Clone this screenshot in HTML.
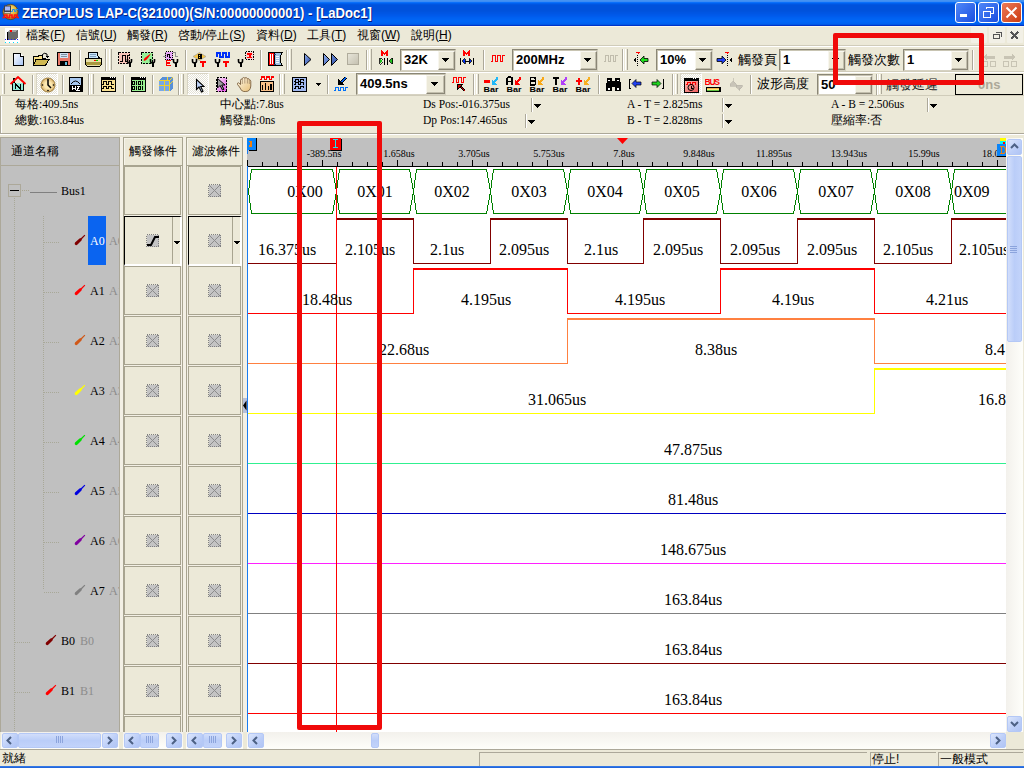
<!DOCTYPE html><html><head><meta charset="utf-8"><style>
html,body{margin:0;padding:0;}
body{width:1024px;height:768px;overflow:hidden;position:relative;background:#ECE9D8;font-family:"Liberation Sans",sans-serif;font-size:12px;color:#000;}
.cj{font-family:"Liberation Sans",sans-serif;}
</style></head><body>
<div style="position:absolute;left:0px;top:0px;width:1024px;height:26px;background:linear-gradient(to bottom,#4492F2 0px,#4492F2 1px,#3C8CF4 1px,#3C8CF4 2px,#0A70FA 2px,#0A70FA 3px,#0060EE 3px,#0060EE 4px,#0056E2 4px,#0056E2 5px,#0052DC 5px,#0052DC 6px,#0052DC 6px,#0052DC 7px,#0052DC 7px,#0052DC 8px,#0052DC 8px,#0052DC 9px,#0052DC 9px,#0052DC 10px,#0052DC 10px,#0052DC 11px,#0053DE 11px,#0053DE 12px,#0055E2 12px,#0055E2 13px,#0056E4 13px,#0056E4 14px,#0058E8 14px,#0058E8 15px,#005AEA 15px,#005AEA 16px,#005CEE 16px,#005CEE 17px,#0060F0 17px,#0060F0 18px,#0062F2 18px,#0062F2 19px,#0064F4 19px,#0064F4 20px,#0066F6 20px,#0066F6 21px,#0066F6 21px,#0066F6 22px,#0064F4 22px,#0064F4 23px,#0062F0 23px,#0062F0 24px,#0058E6 24px,#0058E6 25px,#0034C8 25px,#0034C8 26px)"></div>
<div style="position:absolute;left:0px;top:26px;width:1024px;height:1px;background:#FBF8EC"></div>
<svg style="position:absolute;left:2px;top:3px;shape-rendering:auto" width="18" height="18" viewBox="0 0 18 18" shape-rendering="crispEdges"><defs><radialGradient id="gap" cx="0.45" cy="0.35" r="0.7"><stop offset="0" stop-color="#FFF0A0"/><stop offset="0.6" stop-color="#E0B030"/><stop offset="1" stop-color="#8A6010"/></radialGradient></defs><circle cx="8.5" cy="9" r="7.6" fill="url(#gap)" stroke="#5A4010" stroke-width="0.8"/><rect x="2" y="2.5" width="7" height="8" fill="#404048"/><rect x="3" y="3.5" width="5" height="4" fill="#A8B8F8"/><rect x="2.5" y="9" width="6" height="1" fill="#D0D0D0"/><path d="M9 8.5 H10.5 V6.5 H12.5 V8.5 H14 V6.5 H16" stroke="#1890F0" fill="none"/><path d="M0.5 14.5 H2.5 V12 H5 V14.5 H7.5 V12 H10 V14.5 H12.5 V12 H15 V14.5 H17" stroke="#FF1010" stroke-width="1.6" fill="none"/></svg>
<div style="position:absolute;left:22px;top:3px;height:20px;line-height:20px;white-space:nowrap;font-family:'Liberation Sans', sans-serif;font-weight:bold;font-size:14px;color:#fff;text-shadow:1px 1px 0 #0A1E80;transform:scaleX(0.935);transform-origin:0 0">ZEROPLUS LAP-C(321000)(S/N:00000000001) - [LaDoc1]</div>
<div style="position:absolute;left:955px;top:2px;width:19px;height:19px;border:1px solid #fff;border-radius:3px;background:linear-gradient(135deg,#5088F8,#1A4EE0);"></div>
<svg style="position:absolute;left:955px;top:2px;" width="21" height="21" viewBox="0 0 21 21" shape-rendering="crispEdges"><rect x="5" y="12" width="7" height="3" fill="#fff"/></svg>
<div style="position:absolute;left:978px;top:2px;width:19px;height:19px;border:1px solid #fff;border-radius:3px;background:linear-gradient(135deg,#5088F8,#1A4EE0);"></div>
<svg style="position:absolute;left:978px;top:2px;" width="21" height="21" viewBox="0 0 21 21" shape-rendering="crispEdges"><rect x="5.5" y="9.5" width="7" height="6" fill="none" stroke="#fff" stroke-width="1.5"/><path d="M8.5 7 V5.5 H15.5 V11.5 H13" fill="none" stroke="#fff" stroke-width="1.5"/></svg>
<div style="position:absolute;left:1001px;top:2px;width:19px;height:19px;border:1px solid #fff;border-radius:3px;background:linear-gradient(135deg,#EC7A58,#CC3C12);"></div>
<svg style="position:absolute;left:1001px;top:2px;" width="21" height="21" viewBox="0 0 21 21" shape-rendering="crispEdges"><path d="M5.5 5.5 L15.5 15.5 M15.5 5.5 L5.5 15.5" stroke="#fff" stroke-width="2" shape-rendering="geometricPrecision"/></svg>
<svg style="position:absolute;left:4px;top:27px;" width="16" height="16" viewBox="0 0 16 16" shape-rendering="crispEdges"><rect x="1" y="1" width="15" height="15" fill="#fff"/><path d="M3 5 L6 3 H14 V11 L11 13 H3 Z" fill="#6A6A6A"/><path d="M6 3 H14 L11 5 H3 Z" fill="#A0A0A0"/><rect x="3" y="5" width="1" height="8" fill="#000"/><rect x="6" y="3" width="2" height="2" fill="#f00"/><path d="M1 12 H16" stroke="#2020ff" stroke-dasharray="1 2"/><path d="M1 15 H16" stroke="#00E0FF" stroke-dasharray="1 3"/></svg>
<div style="position:absolute;left:26px;top:27px;height:17px;line-height:17px;white-space:nowrap;font-size:12px;">檔案(<u>F</u>)</div>
<div style="position:absolute;left:76px;top:27px;height:17px;line-height:17px;white-space:nowrap;font-size:12px;">信號(<u>U</u>)</div>
<div style="position:absolute;left:127px;top:27px;height:17px;line-height:17px;white-space:nowrap;font-size:12px;">觸發(<u>R</u>)</div>
<div style="position:absolute;left:178px;top:27px;height:17px;line-height:17px;white-space:nowrap;font-size:12px;">啓動/停止(<u>S</u>)</div>
<div style="position:absolute;left:256px;top:27px;height:17px;line-height:17px;white-space:nowrap;font-size:12px;">資料(<u>D</u>)</div>
<div style="position:absolute;left:307px;top:27px;height:17px;line-height:17px;white-space:nowrap;font-size:12px;">工具(<u>T</u>)</div>
<div style="position:absolute;left:357px;top:27px;height:17px;line-height:17px;white-space:nowrap;font-size:12px;">視窗(<u>W</u>)</div>
<div style="position:absolute;left:411px;top:27px;height:17px;line-height:17px;white-space:nowrap;font-size:12px;">說明(<u>H</u>)</div>
<div style="position:absolute;left:971px;top:27px;width:16px;height:16px;background:#F2F0E6;border-radius:1px"></div>
<div style="position:absolute;left:989px;top:27px;width:16px;height:16px;background:#F2F0E6;border-radius:1px"></div>
<svg style="position:absolute;left:989px;top:27px;" width="16" height="16" viewBox="0 0 16 16" shape-rendering="crispEdges"><rect x="4.5" y="7.5" width="6" height="4" fill="none" stroke="#555" stroke-width="1.2"/><path d="M6.5 5.5 H12.5 V9.5" fill="none" stroke="#555" stroke-width="1.2"/></svg>
<div style="position:absolute;left:1007px;top:27px;width:16px;height:16px;background:#F2F0E6;border-radius:1px"></div>
<svg style="position:absolute;left:1007px;top:27px;" width="16" height="16" viewBox="0 0 16 16" shape-rendering="crispEdges"><path d="M4 5 L11 12 M11 5 L4 12" stroke="#555" stroke-width="2"/></svg>
<div style="position:absolute;left:0px;top:45px;width:1024px;height:1px;background:#D0CCBA"></div>
<div style="position:absolute;left:0px;top:46px;width:1024px;height:1px;background:#FFFFFF"></div>
<div style="position:absolute;left:0px;top:71px;width:1024px;height:1px;background:#D0CCBA"></div>
<div style="position:absolute;left:0px;top:72px;width:1024px;height:1px;background:#FFFFFF"></div>
<div style="position:absolute;left:0px;top:95px;width:1024px;height:1px;background:#D0CCBA"></div>
<div style="position:absolute;left:2px;top:49px;width:1px;height:21px;background:#FFFFFF"></div>
<div style="position:absolute;left:4px;top:49px;width:1px;height:21px;background:#ACA899"></div>
<svg style="position:absolute;left:12px;top:52px;" width="14" height="16" viewBox="0 0 14 16" shape-rendering="crispEdges"><defs><linearGradient id="gd" x1="0" y1="0" x2="1" y2="1"><stop offset="0" stop-color="#fff"/><stop offset="1" stop-color="#A8C4F4"/></linearGradient></defs><path d="M1.5 1.5 H8.5 L11.5 4.5 V13.5 H1.5 Z" fill="url(#gd)" stroke="#000"/><path d="M8.5 1.5 V4.5 H11.5" fill="#fff" stroke="#000"/></svg>
<svg style="position:absolute;left:33px;top:52px;" width="17" height="15" viewBox="0 0 17 15" shape-rendering="crispEdges"><path d="M0.5 4.5 H5 L6 3 H9 V6 H12 V13.5 H0.5 Z" fill="#F8E088" stroke="#000"/><path d="M3 7.5 H16 L12.5 13.5 H0.5 Z" fill="#D0B850" stroke="#000"/><path d="M9 3 Q11 0 14 2 V5" stroke="#000" fill="none" shape-rendering="auto"/><path d="M12 4 L14 6 L16 4" fill="#000"/></svg>
<svg style="position:absolute;left:57px;top:52px;" width="15" height="15" viewBox="0 0 15 15" shape-rendering="crispEdges"><rect x="0.5" y="0.5" width="13" height="13" fill="#E87868" stroke="#000"/><rect x="3" y="1" width="8" height="5" fill="#D0E4F4"/><path d="M4 2.5 H10 M4 4.5 H10" stroke="#8090A0"/><rect x="3" y="9" width="8" height="5" fill="#000"/><rect x="8" y="10" width="2" height="3" fill="#60C0E0"/></svg>
<div style="position:absolute;left:79px;top:50px;width:1px;height:20px;background:#ACA899"></div>
<div style="position:absolute;left:80px;top:50px;width:1px;height:20px;background:#FFFFFF"></div>
<svg style="position:absolute;left:85px;top:52px;" width="17" height="15" viewBox="0 0 17 15" shape-rendering="crispEdges"><path d="M3.5 0.5 H12.5 L13.5 6.5 H3.5 Z" fill="#C8E4F8" stroke="#000"/><path d="M5 2.5 H11 M5 4.5 H11" stroke="#80A0C0"/><path d="M0.5 6.5 H16.5 V12.5 L15 14 H2 L0.5 12.5 Z" fill="#E8E0A8" stroke="#000"/><rect x="1" y="10" width="15" height="3" fill="#A89840"/><rect x="9" y="8" width="2" height="1" fill="#f00"/><rect x="11" y="8" width="2" height="1" fill="#0c0"/><path d="M14 5 L16 7" stroke="#000"/></svg>
<div style="position:absolute;left:105px;top:49px;width:1px;height:22px;background:#ACA899"></div>
<div style="position:absolute;left:106px;top:49px;width:1px;height:22px;background:#FFFFFF"></div>
<div style="position:absolute;left:109px;top:49px;width:1px;height:21px;background:#FFFFFF"></div>
<div style="position:absolute;left:111px;top:49px;width:1px;height:21px;background:#ACA899"></div>
<svg style="position:absolute;left:117px;top:51px;" width="17" height="17" viewBox="0 0 17 17" shape-rendering="crispEdges"><rect x="1.5" y="1.5" width="11" height="11" fill="#F8C4B8" stroke="#000" stroke-dasharray="2 1"/><path d="M3 10 H5 V4 H8 V10 H10 V4 H12" stroke="#000" fill="none"/><path d="M10.5 8 V10 Q10.5 12 12.5 12 Q14.5 12 14.5 10 V8" stroke="#000" stroke-width="1.6" fill="none" shape-rendering="auto"/><rect x="11.5" y="11" width="2" height="5" fill="#000"/></svg>
<svg style="position:absolute;left:140px;top:51px;" width="17" height="17" viewBox="0 0 17 17" shape-rendering="crispEdges"><rect x="1.5" y="1.5" width="11" height="11" fill="#98F098" stroke="#000" stroke-dasharray="2 1"/><path d="M4 10 Q3 8 6 6 L10 3 L10.5 3.5 L8 7 Q6 10 4 10 Z" fill="#f00" shape-rendering="auto"/><path d="M10.5 8 V10 Q10.5 12 12.5 12 Q14.5 12 14.5 10 V8" stroke="#000" stroke-width="1.6" fill="none" shape-rendering="auto"/><rect x="11.5" y="11" width="2" height="5" fill="#000"/></svg>
<svg style="position:absolute;left:162px;top:50px;" width="18" height="18" viewBox="0 0 18 18" shape-rendering="crispEdges"><path d="M1 6 H3 V2 H7 V6 H9 V2 H13 V6 H16" stroke="#909090" fill="none"/><rect x="3.5" y="1.5" width="7" height="8" fill="#E8A8F8" stroke="#000" stroke-dasharray="1 1"/><path d="M5 7 V4 H7.5 V7 H9" stroke="#000" fill="none"/><path d="M4 10.5 H9 M4 13 H8 M4 15.5 H9 M4.5 10.5 V15.5" stroke="#f00" stroke-width="1.5"/><path d="M11.5 9 V11 Q11.5 13 13.5 13 Q15.5 13 15.5 11 V9" stroke="#000" stroke-width="1.6" fill="none" shape-rendering="auto"/><rect x="12.5" y="12" width="2" height="5" fill="#000"/></svg>
<div style="position:absolute;left:185px;top:50px;width:1px;height:20px;background:#ACA899"></div>
<div style="position:absolute;left:186px;top:50px;width:1px;height:20px;background:#FFFFFF"></div>
<svg style="position:absolute;left:191px;top:51px;" width="18" height="17" viewBox="0 0 18 17" shape-rendering="crispEdges"><path d="M2 5.5 L8.5 1.5 L15 5.5 L8.5 9.5 Z" fill="#F8C848" stroke="#A0A0A0" stroke-width="0.7" shape-rendering="auto"/><rect x="7" y="3" width="4" height="5" fill="#000"/><rect x="8" y="4" width="1" height="1" fill="#F8C848"/><rect x="8" y="6" width="1" height="1" fill="#F8C848"/><path d="M1.5 8 V10 Q1.5 12 3.5 12 Q5.5 12 5.5 10 V8" stroke="#000" stroke-width="1.6" fill="none" shape-rendering="auto"/><rect x="2.5" y="11" width="2" height="5" fill="#000"/><rect x="9" y="10" width="6" height="1.5" fill="#f00"/><rect x="11" y="10" width="2" height="6" fill="#f00"/></svg>
<svg style="position:absolute;left:214px;top:51px;" width="17" height="17" viewBox="0 0 17 17" shape-rendering="crispEdges"><path d="M3 6 V2 H6 V6 H9 V2 H12 V6 H15 V2 H16" stroke="#0030F8" stroke-width="1.8" fill="none"/><path d="M1.5 8 V10 Q1.5 12 3.5 12 Q5.5 12 5.5 10 V8" stroke="#000" stroke-width="1.6" fill="none" shape-rendering="auto"/><rect x="2.5" y="11" width="2" height="5" fill="#000"/><rect x="9" y="10" width="6" height="1.5" fill="#f00"/><rect x="11" y="10" width="2" height="6" fill="#f00"/></svg>
<svg style="position:absolute;left:237px;top:50px;" width="18" height="18" viewBox="0 0 18 18" shape-rendering="crispEdges"><rect x="8.5" y="1.5" width="8" height="8" fill="#F8D0D0" stroke="#000" stroke-dasharray="1.5 1"/><rect x="10" y="3" width="5" height="1.5" fill="#f00"/><rect x="11.5" y="3" width="2" height="5" fill="#f00"/><rect x="10" y="7" width="5" height="1" fill="#f00"/><path d="M1.5 9 V11 Q1.5 13 3.5 13 Q5.5 13 5.5 11 V9" stroke="#000" stroke-width="1.6" fill="none" shape-rendering="auto"/><rect x="2.5" y="12" width="2" height="5" fill="#000"/></svg>
<div style="position:absolute;left:260px;top:50px;width:1px;height:20px;background:#ACA899"></div>
<div style="position:absolute;left:261px;top:50px;width:1px;height:20px;background:#FFFFFF"></div>
<svg style="position:absolute;left:267px;top:51px;" width="17" height="16" viewBox="0 0 17 16" shape-rendering="crispEdges"><path d="M1.5 1.5 H7 V14.5 H1.5 Z" fill="#f00" stroke="#000"/><path d="M3.5 3 V13 M5.5 3 V13" stroke="#fff"/><path d="M7 1.5 H15.5 L13.5 5 V11 L15.5 14.5 H7 Z" fill="#A0C0E0" stroke="#000"/><path d="M9 5 H12 M9 7 H12 M9 9 H12 M9 11 H12" stroke="#F0F8FF"/><path d="M7 3 H9 M7 13 H9" stroke="#204080"/></svg>
<div style="position:absolute;left:286px;top:50px;width:1px;height:20px;background:#ACA899"></div>
<div style="position:absolute;left:287px;top:50px;width:1px;height:20px;background:#FFFFFF"></div>
<div style="position:absolute;left:289px;top:49px;width:1px;height:21px;background:#FFFFFF"></div>
<div style="position:absolute;left:291px;top:49px;width:1px;height:21px;background:#ACA899"></div>
<svg style="position:absolute;left:303px;top:52px;" width="10" height="16" viewBox="0 0 10 16" shape-rendering="crispEdges"><defs><linearGradient id="gp" x1="0" y1="0" x2="1" y2="1"><stop offset="0" stop-color="#90B0F0"/><stop offset="1" stop-color="#2848A0"/></linearGradient></defs><path d="M1.5 1.5 L8 7.5 L1.5 13.5 Z" fill="url(#gp)" stroke="#000" shape-rendering="auto"/></svg>
<svg style="position:absolute;left:322px;top:52px;" width="17" height="16" viewBox="0 0 17 16" shape-rendering="crispEdges"><path d="M1.5 1.5 L7.5 7.5 L1.5 13.5 Z M9.5 1.5 L15.5 7.5 L9.5 13.5 Z" fill="url(#gp)" stroke="#000" shape-rendering="auto"/></svg>
<svg style="position:absolute;left:347px;top:53px;" width="13" height="13" viewBox="0 0 13 13" shape-rendering="crispEdges"><defs><linearGradient id="gs" x1="0" y1="0" x2="1" y2="1"><stop offset="0" stop-color="#E8E6DA"/><stop offset="1" stop-color="#C4C0B0"/></linearGradient></defs><rect x="0.5" y="0.5" width="11" height="11" fill="url(#gs)" stroke="#B0AC9C"/></svg>
<div style="position:absolute;left:366px;top:50px;width:1px;height:20px;background:#ACA899"></div>
<div style="position:absolute;left:367px;top:50px;width:1px;height:20px;background:#FFFFFF"></div>
<div style="position:absolute;left:369px;top:49px;width:1px;height:21px;background:#FFFFFF"></div>
<div style="position:absolute;left:371px;top:49px;width:1px;height:21px;background:#ACA899"></div>
<svg style="position:absolute;left:378px;top:50px;" width="17" height="18" viewBox="0 0 17 18" shape-rendering="crispEdges"><path d="M4 6 V1.5 L6.5 4 L9 1.5 V6" stroke="#f00" stroke-width="1.5" fill="none"/><path d="M5 11 L1.5 8 V14 Z" fill="#20C020" stroke="#000" stroke-width="0.8"/><path d="M11 11 L14.5 8 V14 Z" fill="#20C020" stroke="#000" stroke-width="0.8"/><path d="M6.5 8 V15 M9.5 8 V15" stroke="#000"/></svg>
<div style="position:absolute;left:400px;top:49px;width:54px;height:20px;background:#fff;border-top:1px solid #8A8676;border-left:1px solid #8A8676;border-right:1px solid #D6D2C2;border-bottom:1px solid #D6D2C2;box-shadow:inset 1px 1px 0 #C8C4B2"></div>
<div style="position:absolute;left:404px;top:50px;height:20px;line-height:20px;white-space:nowrap;font-family:'Liberation Sans', sans-serif;font-weight:bold;font-size:13px;">32K</div>
<div style="position:absolute;left:438px;top:51px;width:15px;height:17px;background:#ECE9D8;border-right:1px solid #8A8676;border-bottom:1px solid #8A8676;border-left:1px solid #F8F6EE;border-top:1px solid #F8F6EE;box-shadow:inset -1px -1px 0 #C2BEAD"></div>
<svg style="position:absolute;left:442px;top:58px;" width="8" height="4" viewBox="0 0 8 4" shape-rendering="crispEdges"><path d="M0 0 H7 L3.5 4 Z" fill="#000"/></svg>
<svg style="position:absolute;left:459px;top:50px;" width="17" height="18" viewBox="0 0 17 18" shape-rendering="crispEdges"><path d="M5 6 V1.5 L7.5 4 L10 1.5 V6" stroke="#f00" stroke-width="1.5" fill="none"/><path d="M1.5 8 V15 M14.5 8 V15" stroke="#000"/><path d="M3 11 L6 8.5 V13.5 Z M13 11 L10 8.5 V13.5 Z" fill="#0030F0" stroke="#000" stroke-width="0.8"/><path d="M6 11 H10" stroke="#000"/></svg>
<div style="position:absolute;left:483px;top:50px;width:1px;height:20px;background:#ACA899"></div>
<div style="position:absolute;left:484px;top:50px;width:1px;height:20px;background:#FFFFFF"></div>
<svg style="position:absolute;left:490px;top:54px;" width="16" height="10" viewBox="0 0 16 10" shape-rendering="crispEdges"><path d="M0.5 7.5 H2.5 V1.5 H5.5 V7.5 H7.5 V1.5 H10.5 V7.5 H12.5 V1.5 H15" stroke="#f00" stroke-width="1.2" fill="none"/></svg>
<div style="position:absolute;left:512px;top:49px;width:84px;height:20px;background:#fff;border-top:1px solid #8A8676;border-left:1px solid #8A8676;border-right:1px solid #D6D2C2;border-bottom:1px solid #D6D2C2;box-shadow:inset 1px 1px 0 #C8C4B2"></div>
<div style="position:absolute;left:516px;top:50px;height:20px;line-height:20px;white-space:nowrap;font-family:'Liberation Sans', sans-serif;font-weight:bold;font-size:13px;">200MHz</div>
<div style="position:absolute;left:580px;top:51px;width:15px;height:17px;background:#ECE9D8;border-right:1px solid #8A8676;border-bottom:1px solid #8A8676;border-left:1px solid #F8F6EE;border-top:1px solid #F8F6EE;box-shadow:inset -1px -1px 0 #C2BEAD"></div>
<svg style="position:absolute;left:584px;top:58px;" width="8" height="4" viewBox="0 0 8 4" shape-rendering="crispEdges"><path d="M0 0 H7 L3.5 4 Z" fill="#000"/></svg>
<svg style="position:absolute;left:603px;top:54px;" width="16" height="10" viewBox="0 0 16 10" shape-rendering="crispEdges"><path d="M0.5 7.5 H2.5 V1.5 H5.5 V7.5 H7.5 V1.5 H10.5 V7.5 H12.5 V1.5 H15" stroke="#C0BCAC" fill="none"/></svg>
<div style="position:absolute;left:622px;top:49px;width:1px;height:22px;background:#ACA899"></div>
<div style="position:absolute;left:623px;top:49px;width:1px;height:22px;background:#FFFFFF"></div>
<div style="position:absolute;left:625px;top:49px;width:1px;height:21px;background:#FFFFFF"></div>
<div style="position:absolute;left:627px;top:49px;width:1px;height:21px;background:#ACA899"></div>
<svg style="position:absolute;left:632px;top:51px;" width="17" height="17" viewBox="0 0 17 17" shape-rendering="crispEdges"><path d="M5.5 4 V16" stroke="#000" stroke-dasharray="1 1"/><path d="M4 1.5 H8 M6 1.5 V3" stroke="#f00"/><path d="M1 9 L4 6.5 V11.5 Z" fill="#000"/><path d="M8 9 L12 5 V7.5 H16 V10.5 H12 V13 Z" fill="#20E020" stroke="#000" stroke-width="0.8" shape-rendering="auto"/></svg>
<div style="position:absolute;left:656px;top:49px;width:55px;height:20px;background:#fff;border-top:1px solid #8A8676;border-left:1px solid #8A8676;border-right:1px solid #D6D2C2;border-bottom:1px solid #D6D2C2;box-shadow:inset 1px 1px 0 #C8C4B2"></div>
<div style="position:absolute;left:660px;top:50px;height:20px;line-height:20px;white-space:nowrap;font-family:'Liberation Sans', sans-serif;font-weight:bold;font-size:13px;">10%</div>
<div style="position:absolute;left:695px;top:51px;width:15px;height:17px;background:#ECE9D8;border-right:1px solid #8A8676;border-bottom:1px solid #8A8676;border-left:1px solid #F8F6EE;border-top:1px solid #F8F6EE;box-shadow:inset -1px -1px 0 #C2BEAD"></div>
<svg style="position:absolute;left:699px;top:58px;" width="8" height="4" viewBox="0 0 8 4" shape-rendering="crispEdges"><path d="M0 0 H7 L3.5 4 Z" fill="#000"/></svg>
<svg style="position:absolute;left:716px;top:51px;" width="17" height="17" viewBox="0 0 17 17" shape-rendering="crispEdges"><path d="M11.5 4 V16" stroke="#000" stroke-dasharray="1 1"/><path d="M9 1.5 H13 M11 1.5 V3" stroke="#f00"/><path d="M10 9 L6 5 V7.5 H1 V10.5 H6 V13 Z" fill="#2040F0" stroke="#000" stroke-width="0.8" shape-rendering="auto"/><path d="M13 9 L16 6.5 V11.5 Z" fill="#000"/></svg>
<div style="position:absolute;left:738px;top:50px;height:20px;line-height:20px;white-space:nowrap;font-size:12.5px;">觸發頁</div>
<div style="position:absolute;left:779px;top:49px;width:65px;height:20px;background:#fff;border-top:1px solid #8A8676;border-left:1px solid #8A8676;border-right:1px solid #D6D2C2;border-bottom:1px solid #D6D2C2;box-shadow:inset 1px 1px 0 #C8C4B2"></div>
<div style="position:absolute;left:783px;top:50px;height:20px;line-height:20px;white-space:nowrap;font-family:'Liberation Sans', sans-serif;font-weight:bold;font-size:13px;">1</div>
<div style="position:absolute;left:828px;top:51px;width:15px;height:17px;background:#ECE9D8;border-right:1px solid #8A8676;border-bottom:1px solid #8A8676;border-left:1px solid #F8F6EE;border-top:1px solid #F8F6EE;box-shadow:inset -1px -1px 0 #C2BEAD"></div>
<svg style="position:absolute;left:832px;top:58px;" width="8" height="4" viewBox="0 0 8 4" shape-rendering="crispEdges"><path d="M0 0 H7 L3.5 4 Z" fill="#000"/></svg>
<div style="position:absolute;left:848px;top:50px;height:20px;line-height:20px;white-space:nowrap;font-size:12.5px;">觸發次數</div>
<div style="position:absolute;left:903px;top:49px;width:64px;height:20px;background:#fff;border-top:1px solid #8A8676;border-left:1px solid #8A8676;border-right:1px solid #D6D2C2;border-bottom:1px solid #D6D2C2;box-shadow:inset 1px 1px 0 #C8C4B2"></div>
<div style="position:absolute;left:907px;top:50px;height:20px;line-height:20px;white-space:nowrap;font-family:'Liberation Sans', sans-serif;font-weight:bold;font-size:13px;">1</div>
<div style="position:absolute;left:951px;top:51px;width:15px;height:17px;background:#ECE9D8;border-right:1px solid #8A8676;border-bottom:1px solid #8A8676;border-left:1px solid #F8F6EE;border-top:1px solid #F8F6EE;box-shadow:inset -1px -1px 0 #C2BEAD"></div>
<svg style="position:absolute;left:955px;top:58px;" width="8" height="4" viewBox="0 0 8 4" shape-rendering="crispEdges"><path d="M0 0 H7 L3.5 4 Z" fill="#000"/></svg>
<div style="position:absolute;left:972px;top:50px;width:1px;height:20px;background:#ACA899"></div>
<div style="position:absolute;left:973px;top:50px;width:1px;height:20px;background:#FFFFFF"></div>
<svg style="position:absolute;left:981px;top:52px;" width="17" height="16" viewBox="0 0 17 16" shape-rendering="crispEdges"><path d="M2 5 L6 1.5 V3.5 H14 V6.5 H6 V8.5 Z" fill="#C8C4B4"/><rect x="1.5" y="9.5" width="5" height="5" fill="none" stroke="#C8C4B4"/><rect x="9.5" y="9.5" width="5" height="5" fill="none" stroke="#C8C4B4"/></svg>
<svg style="position:absolute;left:1002px;top:52px;" width="17" height="16" viewBox="0 0 17 16" shape-rendering="crispEdges"><path d="M14 5 L10 1.5 V3.5 H2 V6.5 H10 V8.5 Z" fill="#C8C4B4"/><rect x="1.5" y="9.5" width="5" height="5" fill="none" stroke="#C8C4B4"/><rect x="9.5" y="9.5" width="5" height="5" fill="none" stroke="#C8C4B4"/></svg>
<div style="position:absolute;left:2px;top:74px;width:1px;height:20px;background:#FFFFFF"></div>
<div style="position:absolute;left:4px;top:74px;width:1px;height:20px;background:#ACA899"></div>
<svg style="position:absolute;left:10px;top:76px;" width="17" height="16" viewBox="0 0 17 16" shape-rendering="crispEdges"><path d="M2.5 6.5 V14.5 H13.5 V6.5" fill="#90E8D8" stroke="#000"/><rect x="3" y="2" width="2" height="5" fill="#000"/><path d="M0.5 8 L8 1 L15.5 8" stroke="#f00" stroke-width="1.8" fill="none" shape-rendering="auto"/><path d="M5.5 13 V8 L10.5 13 V8" stroke="#000" stroke-width="1.4" fill="none"/></svg>
<div style="position:absolute;left:32px;top:75px;width:1px;height:19px;background:#ACA899"></div>
<div style="position:absolute;left:33px;top:75px;width:1px;height:19px;background:#FFFFFF"></div>
<div style="position:absolute;left:36px;top:73px;width:22px;height:22px;background:conic-gradient(#FFFFFF 25%,#E4E2D6 0 50%,#FFFFFF 0 75%,#E4E2D6 0) 0 0/2px 2px;border-top:1px solid #D8D4C4;border-left:1px solid #D8D4C4;border-right:1px solid #fff;border-bottom:1px solid #fff;box-sizing:border-box"></div>
<svg style="position:absolute;left:40px;top:77px;shape-rendering:auto" width="16" height="16" viewBox="0 0 16 16" shape-rendering="crispEdges"><defs><radialGradient id="gc"><stop offset="0.5" stop-color="#FCE8B0"/><stop offset="1" stop-color="#D8B068"/></radialGradient></defs><circle cx="8" cy="8" r="7" fill="url(#gc)" stroke="#A08040"/><path d="M8 3 V8 L11 11" stroke="#000" stroke-width="1.5" fill="none"/><circle cx="8" cy="2.5" r="0.8"/><circle cx="8" cy="13.5" r="0.8"/><circle cx="2.5" cy="8" r="0.8"/><circle cx="13.5" cy="8" r="0.8"/></svg>
<div style="position:absolute;left:62px;top:75px;width:1px;height:19px;background:#ACA899"></div>
<div style="position:absolute;left:63px;top:75px;width:1px;height:19px;background:#FFFFFF"></div>
<svg style="position:absolute;left:68px;top:76px;" width="15" height="16" viewBox="0 0 15 16" shape-rendering="crispEdges"><rect x="0.5" y="0.5" width="14" height="15" fill="#000"/><rect x="2" y="2" width="11" height="7" fill="#A8C8F0"/><path d="M3 8 Q7.5 2 12 8" stroke="#000" fill="none" shape-rendering="auto"/><path d="M4 10 V14 M4 12 H7 M7 10 V14 M9 10 H12 L9 14 H12" stroke="#fff"/></svg>
<div style="position:absolute;left:88px;top:74px;width:1px;height:21px;background:#ACA899"></div>
<div style="position:absolute;left:89px;top:74px;width:1px;height:21px;background:#FFFFFF"></div>
<div style="position:absolute;left:91px;top:74px;width:1px;height:20px;background:#FFFFFF"></div>
<div style="position:absolute;left:93px;top:74px;width:1px;height:20px;background:#ACA899"></div>
<svg style="position:absolute;left:100px;top:76px;" width="16" height="16" viewBox="0 0 16 16" shape-rendering="crispEdges"><rect x="0.5" y="0.5" width="15" height="15" fill="#000"/><rect x="1.5" y="3.5" width="13" height="11" fill="#F8E090"/><rect x="10" y="1" width="1" height="1" fill="#fff"/><rect x="12" y="1" width="1" height="1" fill="#fff"/><path d="M2 8.5 H3.5 V5.5 H6.5 V8.5 H8.5 V5.5 H11.5 V8.5 H14 M2 12.5 H3.5 V10 H6.5 V12.5 H8.5 V10 H11.5 V12.5 H14" stroke="#000" fill="none"/><rect x="14" y="1" width="1" height="1" fill="#fff"/></svg>
<div style="position:absolute;left:123px;top:75px;width:1px;height:19px;background:#ACA899"></div>
<div style="position:absolute;left:124px;top:75px;width:1px;height:19px;background:#FFFFFF"></div>
<svg style="position:absolute;left:130px;top:76px;" width="16" height="16" viewBox="0 0 16 16" shape-rendering="crispEdges"><rect x="0.5" y="0.5" width="15" height="15" fill="#000"/><rect x="1.5" y="3.5" width="13" height="11" fill="#98F090"/><rect x="10" y="1" width="1" height="1" fill="#fff"/><rect x="12" y="1" width="1" height="1" fill="#fff"/><rect x="2.5" y="5.5" width="2" height="3" fill="none" stroke="#000"/><rect x="8.5" y="5.5" width="2" height="3" fill="none" stroke="#000"/><rect x="2.5" y="10.5" width="2" height="3" fill="none" stroke="#000"/><rect x="8.5" y="10.5" width="2" height="3" fill="none" stroke="#000"/><path d="M6.5 5 V9 M12.5 5 V9 M6.5 10 V14 M12.5 10 V14" stroke="#000"/><rect x="14" y="1" width="1" height="1" fill="#fff"/></svg>
<div style="position:absolute;left:152px;top:75px;width:1px;height:19px;background:#ACA899"></div>
<div style="position:absolute;left:153px;top:75px;width:1px;height:19px;background:#FFFFFF"></div>
<svg style="position:absolute;left:158px;top:76px;" width="16" height="16" viewBox="0 0 16 16" shape-rendering="crispEdges"><path d="M1 4 L4 1 H15 V12 L12 15 H1 Z" fill="#5890D8"/><rect x="1" y="4" width="11" height="11" fill="#78A8E8"/><path d="M1 4.5 H11.5 V15 M11.5 4.5 L15 1" stroke="#F0D030" fill="none"/><path d="M6.5 4 V15 M1 9.5 H12 M9 1 V4 M12 8 L15 5" stroke="#F0D030"/></svg>
<div style="position:absolute;left:178px;top:74px;width:1px;height:21px;background:#ACA899"></div>
<div style="position:absolute;left:179px;top:74px;width:1px;height:21px;background:#FFFFFF"></div>
<div style="position:absolute;left:181px;top:74px;width:1px;height:20px;background:#FFFFFF"></div>
<div style="position:absolute;left:183px;top:74px;width:1px;height:20px;background:#ACA899"></div>
<div style="position:absolute;left:187px;top:73px;width:22px;height:22px;background:conic-gradient(#FFFFFF 25%,#E4E2D6 0 50%,#FFFFFF 0 75%,#E4E2D6 0) 0 0/2px 2px;border-top:1px solid #D8D4C4;border-left:1px solid #D8D4C4;border-right:1px solid #fff;border-bottom:1px solid #fff;box-sizing:border-box"></div>
<svg style="position:absolute;left:195px;top:78px;shape-rendering:auto" width="10" height="15" viewBox="0 0 10 15" shape-rendering="crispEdges"><path d="M1.5 1.5 L1.5 11.5 L4 9 L6.5 14 L8 13.2 L5.7 8.5 L9 8.5 Z" fill="#C0D4F8" stroke="#000" stroke-width="1.1" stroke-linejoin="miter"/></svg>
<svg style="position:absolute;left:215px;top:76px;" width="14" height="17" viewBox="0 0 14 17" shape-rendering="crispEdges"><defs><linearGradient id="gpk" x1="0" y1="0" x2="1" y2="1"><stop offset="0" stop-color="#F8F0F8"/><stop offset="1" stop-color="#E850E8"/></linearGradient></defs><rect x="1.5" y="1.5" width="10" height="14" fill="url(#gpk)" stroke="#000" stroke-dasharray="2 1"/><path d="M2.5 2.5 L2.5 12 L5 9.5 L7.5 14 L9 13.2 L6.7 9 L10 9 Z" fill="#A0A0A0" stroke="#000" shape-rendering="auto"/></svg>
<svg style="position:absolute;left:236px;top:76px;shape-rendering:auto" width="17" height="17" viewBox="0 0 17 17" shape-rendering="crispEdges"><defs><linearGradient id="gh" x1="0" y1="0" x2="1" y2="1"><stop offset="0" stop-color="#FFF8E8"/><stop offset="1" stop-color="#E8C078"/></linearGradient></defs><path d="M3.5 11 L1.5 8.5 Q1 6.8 2.6 6.8 L4.5 8.5 V4.2 Q4.8 2.6 6.3 3.2 V2.4 Q7.3 0.8 8.8 2 Q10.2 0.9 11.4 2.5 Q13 2.2 13.3 3.8 Q14.8 3.9 14.8 5.3 V10 Q14.3 15.5 9.8 15.5 H7.8 Q5.3 15.5 3.5 11 Z" fill="url(#gh)" stroke="#7A6040" stroke-width="0.9"/><path d="M6.3 3.2 V8 M8.8 2 V7.5 M11.4 2.5 V7.5 M13.3 3.8 V8" stroke="#9A8060" stroke-width="0.7"/></svg>
<svg style="position:absolute;left:259px;top:76px;" width="16" height="16" viewBox="0 0 16 16" shape-rendering="crispEdges"><path d="M0.5 3.5 H2.5 V1 H5.5 V3.5 H7.5 V1 H10.5 V3.5 H12.5 V1 H15" stroke="#f00" fill="none" stroke-width="1.2"/><rect x="0.5" y="4.5" width="14" height="11" fill="#000"/><rect x="1.5" y="5.5" width="12" height="9" fill="#F8C088"/><path d="M3.5 14 V9 M6.5 14 V7 M9.5 14 V10 M12 14 V8" stroke="#000" stroke-width="1.5"/></svg>
<div style="position:absolute;left:279px;top:74px;width:1px;height:21px;background:#ACA899"></div>
<div style="position:absolute;left:280px;top:74px;width:1px;height:21px;background:#FFFFFF"></div>
<div style="position:absolute;left:282px;top:74px;width:1px;height:20px;background:#FFFFFF"></div>
<div style="position:absolute;left:284px;top:74px;width:1px;height:20px;background:#ACA899"></div>
<svg style="position:absolute;left:291px;top:76px;" width="16" height="16" viewBox="0 0 16 16" shape-rendering="crispEdges"><rect x="0.5" y="0.5" width="15" height="15" fill="#000"/><rect x="1.5" y="1.5" width="13" height="13" fill="#A0B8F0"/><path d="M2.5 5 H4.5 V3 H7.5 V5 H9.5 V3 H12.5 V5 M2.5 8.5 H4.5 V6.5 H7.5 V8.5 H9.5 V6.5 H12.5 V8.5 M2.5 12 H4.5 V10 H7.5 V12 H9.5 V10 H12.5 V12" stroke="#000" fill="none"/></svg>
<svg style="position:absolute;left:315px;top:83px;" width="6" height="3" viewBox="0 0 6 3" shape-rendering="crispEdges"><path d="M0 0 H6 L3 3 Z" fill="#000"/></svg>
<div style="position:absolute;left:327px;top:75px;width:1px;height:19px;background:#ACA899"></div>
<div style="position:absolute;left:328px;top:75px;width:1px;height:19px;background:#FFFFFF"></div>
<svg style="position:absolute;left:333px;top:76px;" width="16" height="16" viewBox="0 0 16 16" shape-rendering="crispEdges"><path d="M0.5 14.5 H2.5 V11.5 H5.5 V14.5 H7.5 V11.5 H10.5 V14.5 H12.5 V11.5 H15" stroke="#0070F8" stroke-width="1.3" fill="none"/><path d="M13 1.5 L7 7.5" stroke="#000" stroke-width="3"/><path d="M13 1.5 L7 7.5" stroke="#0060F0" stroke-width="1.5"/><path d="M5 3 V9 H11 Z" fill="#000"/></svg>
<div style="position:absolute;left:356px;top:73px;width:88px;height:20px;background:#fff;border-top:1px solid #8A8676;border-left:1px solid #8A8676;border-right:1px solid #D6D2C2;border-bottom:1px solid #D6D2C2;box-shadow:inset 1px 1px 0 #C8C4B2"></div>
<div style="position:absolute;left:360px;top:74px;height:20px;line-height:20px;white-space:nowrap;font-family:'Liberation Sans', sans-serif;font-weight:bold;font-size:13px;">409.5ns</div>
<div style="position:absolute;left:426px;top:75px;width:17px;height:17px;background:#ECE9D8;border-right:1px solid #8A8676;border-bottom:1px solid #8A8676;border-left:1px solid #F8F6EE;border-top:1px solid #F8F6EE;box-shadow:inset -1px -1px 0 #C2BEAD"></div>
<svg style="position:absolute;left:431px;top:82px;" width="8" height="4" viewBox="0 0 8 4" shape-rendering="crispEdges"><path d="M0 0 H7 L3.5 4 Z" fill="#000"/></svg>
<svg style="position:absolute;left:451px;top:76px;" width="16" height="16" viewBox="0 0 16 16" shape-rendering="crispEdges"><path d="M0.5 6.5 H2.5 V1.5 H5.5 V6.5 H7.5 V1.5 H10.5 V6.5 H12.5 V1.5 H15" stroke="#f00" stroke-width="1.3" fill="none"/><path d="M14 15 L9 10" stroke="#000" stroke-width="2.6"/><path d="M14 15 L9 10" stroke="#D00000" stroke-width="1"/><path d="M6 8 H12 L6 14 Z" fill="#000"/><path d="M7 9 H10 L7 12 Z" fill="#D00000"/></svg>
<div style="position:absolute;left:473px;top:74px;width:1px;height:21px;background:#ACA899"></div>
<div style="position:absolute;left:474px;top:74px;width:1px;height:21px;background:#FFFFFF"></div>
<div style="position:absolute;left:476px;top:74px;width:1px;height:20px;background:#FFFFFF"></div>
<div style="position:absolute;left:478px;top:74px;width:1px;height:20px;background:#ACA899"></div>
<svg style="position:absolute;left:483px;top:76px;" width="17" height="17" viewBox="0 0 17 17" shape-rendering="crispEdges"><rect x="1" y="4" width="6" height="2.5" fill="#f00"/><path d="M14 1 V3 L10.5 6.5" stroke="#20B8F8" stroke-width="2.2" fill="none"/><path d="M8.5 3.5 V9 H14 Z" fill="#20B8F8"/><text x="0.5" y="16" font-size="7" font-weight="bold" fill="#000" font-family="Liberation Sans" textLength="15" lengthAdjust="spacingAndGlyphs">Bar</text></svg>
<svg style="position:absolute;left:506px;top:76px;" width="17" height="17" viewBox="0 0 17 17" shape-rendering="crispEdges"><path d="M1 9 V3 Q1 1 3.5 1 Q6 1 6 3 V9 M1 5.5 H6" stroke="#000" stroke-width="1.8" fill="none"/><path d="M14 1 V3 L10.5 6.5" stroke="#f00" stroke-width="2.2" fill="none"/><path d="M8.5 3.5 V9 H14 Z" fill="#f00"/><text x="0.5" y="16" font-size="7" font-weight="bold" fill="#000" font-family="Liberation Sans" textLength="15" lengthAdjust="spacingAndGlyphs">Bar</text></svg>
<svg style="position:absolute;left:529px;top:76px;" width="17" height="17" viewBox="0 0 17 17" shape-rendering="crispEdges"><path d="M1.5 9 V1.5 H4.5 Q6.5 1.5 6.5 3.2 Q6.5 5 4.5 5 Q6.5 5 6.5 7 Q6.5 9 4.5 9 Z M1.5 5 H4.5" stroke="#000" stroke-width="1.6" fill="none"/><path d="M14 1 V3 L10.5 6.5" stroke="#F8A818" stroke-width="2.2" fill="none"/><path d="M8.5 3.5 V9 H14 Z" fill="#F8A818"/><text x="0.5" y="16" font-size="7" font-weight="bold" fill="#000" font-family="Liberation Sans" textLength="15" lengthAdjust="spacingAndGlyphs">Bar</text></svg>
<svg style="position:absolute;left:552px;top:76px;" width="17" height="17" viewBox="0 0 17 17" shape-rendering="crispEdges"><path d="M0.5 1.8 H7 M3.75 1.8 V9" stroke="#000" stroke-width="1.8" fill="none"/><path d="M14 1 V3 L10.5 6.5" stroke="#B040F8" stroke-width="2.2" fill="none"/><path d="M8.5 3.5 V9 H14 Z" fill="#B040F8"/><text x="0.5" y="16" font-size="7" font-weight="bold" fill="#000" font-family="Liberation Sans" textLength="15" lengthAdjust="spacingAndGlyphs">Bar</text></svg>
<svg style="position:absolute;left:575px;top:76px;" width="17" height="17" viewBox="0 0 17 17" shape-rendering="crispEdges"><path d="M0.5 5 H7 M3.75 1.5 V8.5" stroke="#f00" stroke-width="2"/><path d="M14 1 V3 L10.5 6.5" stroke="#F8B020" stroke-width="2.2" fill="none"/><path d="M8.5 3.5 V9 H14 Z" fill="#F8B020"/><text x="0.5" y="16" font-size="7" font-weight="bold" fill="#000" font-family="Liberation Sans" textLength="15" lengthAdjust="spacingAndGlyphs">Bar</text></svg>
<div style="position:absolute;left:598px;top:75px;width:1px;height:19px;background:#ACA899"></div>
<div style="position:absolute;left:599px;top:75px;width:1px;height:19px;background:#FFFFFF"></div>
<svg style="position:absolute;left:605px;top:77px;" width="17" height="15" viewBox="0 0 17 15" shape-rendering="crispEdges"><path d="M2 1 H7 V4 H10 V1 H15 V5 L16 6 V14 H10 V10 H7 V14 H1 V6 L2 5 Z" fill="#000"/><rect x="3" y="11" width="2" height="2" fill="#fff"/><rect x="12" y="11" width="2" height="2" fill="#fff"/><rect x="3" y="3" width="2" height="1" fill="#fff"/><rect x="12" y="3" width="2" height="1" fill="#fff"/></svg>
<svg style="position:absolute;left:628px;top:78px;" width="14" height="12" viewBox="0 0 14 12" shape-rendering="crispEdges"><path d="M2.5 1 H1.5 V10.5 H3" stroke="#000" fill="none"/><path d="M4 5.5 L8 1.5 V4 H13 V7 H8 V9.5 Z" fill="#2040F0" stroke="#000" stroke-width="0.7" shape-rendering="auto"/></svg>
<svg style="position:absolute;left:651px;top:78px;" width="14" height="12" viewBox="0 0 14 12" shape-rendering="crispEdges"><path d="M11.5 1 H12.5 V10.5 H11" stroke="#000" fill="none"/><path d="M10 5.5 L6 1.5 V4 H1 V7 H6 V9.5 Z" fill="#20D020" stroke="#000" stroke-width="0.7" shape-rendering="auto"/></svg>
<div style="position:absolute;left:672px;top:74px;width:1px;height:21px;background:#ACA899"></div>
<div style="position:absolute;left:673px;top:74px;width:1px;height:21px;background:#FFFFFF"></div>
<div style="position:absolute;left:675px;top:74px;width:1px;height:20px;background:#FFFFFF"></div>
<div style="position:absolute;left:677px;top:74px;width:1px;height:20px;background:#ACA899"></div>
<div style="position:absolute;left:680px;top:73px;width:22px;height:22px;background:conic-gradient(#FFFFFF 25%,#E4E2D6 0 50%,#FFFFFF 0 75%,#E4E2D6 0) 0 0/2px 2px;border-top:1px solid #D8D4C4;border-left:1px solid #D8D4C4;border-right:1px solid #fff;border-bottom:1px solid #fff;box-sizing:border-box"></div>
<svg style="position:absolute;left:683px;top:77px;" width="16" height="16" viewBox="0 0 16 16" shape-rendering="crispEdges"><rect x="0.5" y="0.5" width="15" height="15" fill="#000"/><defs><linearGradient id="gr" x1="0" y1="0" x2="1" y2="1"><stop offset="0" stop-color="#FFC0B8"/><stop offset="1" stop-color="#F06060"/></linearGradient></defs><rect x="1.5" y="3.5" width="13" height="11" fill="url(#gr)"/><rect x="10" y="1" width="1" height="1" fill="#fff"/><rect x="12" y="1" width="1" height="1" fill="#fff"/><path d="M2.5 7.5 H4.5 V5 H7.5 V7.5 H9.5 V5 H12.5 V7.5" stroke="#f00" fill="none"/><circle cx="8" cy="10.5" r="3" fill="none" stroke="#000" shape-rendering="auto"/><path d="M8 8.5 V10.5 L9.5 12" stroke="#000" fill="none"/></svg>
<svg style="position:absolute;left:705px;top:77px;" width="16" height="16" viewBox="0 0 16 16" shape-rendering="crispEdges"><text x="-0.5" y="7.5" font-size="8.5" font-weight="bold" fill="#f00" font-family="Liberation Sans" textLength="15.5">BUS</text><rect x="0.5" y="9.5" width="15" height="5" fill="#000"/><rect x="2" y="10.5" width="12" height="1" fill="#F8B050"/><rect x="2" y="11.5" width="12" height="1" fill="#F8F080"/><rect x="2" y="12.5" width="12" height="1" fill="#60C040"/></svg>
<svg style="position:absolute;left:729px;top:77px;" width="14" height="15" viewBox="0 0 14 15" shape-rendering="crispEdges"><path d="M4 1 V4 M1 7 L4 4 L7 7 V9 H1 Z M7 9 V11 M10 11 V14 M7 8 H13 V10 L10 13 L7 10 Z" fill="#C8C4B8" stroke="#B8B4A8" stroke-width="0.6"/></svg>
<div style="position:absolute;left:750px;top:75px;width:1px;height:19px;background:#ACA899"></div>
<div style="position:absolute;left:751px;top:75px;width:1px;height:19px;background:#FFFFFF"></div>
<div style="position:absolute;left:757px;top:74px;height:20px;line-height:20px;white-space:nowrap;font-size:12.5px;">波形高度</div>
<div style="position:absolute;left:817px;top:74px;width:54px;height:19px;background:#fff;border-top:1px solid #8A8676;border-left:1px solid #8A8676;border-right:1px solid #D6D2C2;border-bottom:1px solid #D6D2C2;box-shadow:inset 1px 1px 0 #C8C4B2"></div>
<div style="position:absolute;left:821px;top:75px;height:19px;line-height:19px;white-space:nowrap;font-family:'Liberation Sans', sans-serif;font-weight:bold;font-size:13px;">50</div>
<div style="position:absolute;left:855px;top:76px;width:15px;height:16px;background:#ECE9D8;border-right:1px solid #8A8676;border-bottom:1px solid #8A8676;border-left:1px solid #F8F6EE;border-top:1px solid #F8F6EE;box-shadow:inset -1px -1px 0 #C2BEAD"></div>
<div style="position:absolute;left:876px;top:74px;width:1px;height:21px;background:#ACA899"></div>
<div style="position:absolute;left:877px;top:74px;width:1px;height:21px;background:#FFFFFF"></div>
<div style="position:absolute;left:879px;top:74px;width:1px;height:20px;background:#FFFFFF"></div>
<div style="position:absolute;left:881px;top:74px;width:1px;height:20px;background:#ACA899"></div>
<div style="position:absolute;left:886px;top:75px;height:20px;line-height:20px;white-space:nowrap;font-size:12.5px;color:#222">觸發延遲</div>
<div style="position:absolute;left:955px;top:74px;width:68px;height:21px;box-sizing:border-box;border:1px solid #000;background:#ECE9D8"></div>
<div style="position:absolute;left:978px;top:75px;height:19px;line-height:19px;white-space:nowrap;font-family:'Liberation Sans', sans-serif;font-weight:bold;font-size:13px;color:#ACA899">0ns</div>
<div style="position:absolute;left:0px;top:96px;width:1px;height:38px;background:#ACA899"></div>
<div style="position:absolute;left:1px;top:96px;width:1px;height:38px;background:#FFFFFF"></div>
<div style="position:absolute;left:0px;top:133px;width:1024px;height:1px;background:#ACA899"></div>
<div style="position:absolute;left:0px;top:134px;width:1024px;height:1px;background:#FFFFFF"></div>
<div style="position:absolute;left:15px;top:96px;height:16px;line-height:16px;white-space:nowrap;font-family:'Liberation Serif', serif;font-size:11.5px;">每格:409.5ns</div>
<div style="position:absolute;left:15px;top:112px;height:16px;line-height:16px;white-space:nowrap;font-family:'Liberation Serif', serif;font-size:11.5px;">總數:163.84us</div>
<div style="position:absolute;left:220px;top:96px;height:16px;line-height:16px;white-space:nowrap;font-family:'Liberation Serif', serif;font-size:11.5px;">中心點:7.8us</div>
<div style="position:absolute;left:220px;top:112px;height:16px;line-height:16px;white-space:nowrap;font-family:'Liberation Serif', serif;font-size:11.5px;">觸發點:0ns</div>
<div style="position:absolute;left:423px;top:96px;height:16px;line-height:16px;white-space:nowrap;font-family:'Liberation Serif', serif;font-size:11.5px;">Ds Pos:-016.375us</div>
<div style="position:absolute;left:423px;top:112px;height:16px;line-height:16px;white-space:nowrap;font-family:'Liberation Serif', serif;font-size:11.5px;">Dp Pos:147.465us</div>
<div style="position:absolute;left:627px;top:96px;height:16px;line-height:16px;white-space:nowrap;font-family:'Liberation Serif', serif;font-size:11.5px;">A - T = 2.825ms</div>
<div style="position:absolute;left:627px;top:112px;height:16px;line-height:16px;white-space:nowrap;font-family:'Liberation Serif', serif;font-size:11.5px;">B - T = 2.828ms</div>
<div style="position:absolute;left:831px;top:96px;height:16px;line-height:16px;white-space:nowrap;font-family:'Liberation Serif', serif;font-size:11.5px;">A - B = 2.506us</div>
<div style="position:absolute;left:831px;top:112px;height:16px;line-height:16px;white-space:nowrap;font-family:'Liberation Serif', serif;font-size:11.5px;">壓縮率:否</div>
<div style="position:absolute;left:531px;top:98px;width:1px;height:14px;background:#ACA899"></div>
<div style="position:absolute;left:532px;top:98px;width:1px;height:14px;background:#FFFFFF"></div>
<svg style="position:absolute;left:534px;top:104px;" width="8" height="4" viewBox="0 0 8 4" shape-rendering="crispEdges"><path d="M0 0 H7 L3.5 4 Z" fill="#000"/></svg>
<div style="position:absolute;left:525px;top:114px;width:1px;height:14px;background:#ACA899"></div>
<div style="position:absolute;left:526px;top:114px;width:1px;height:14px;background:#FFFFFF"></div>
<svg style="position:absolute;left:528px;top:120px;" width="8" height="4" viewBox="0 0 8 4" shape-rendering="crispEdges"><path d="M0 0 H7 L3.5 4 Z" fill="#000"/></svg>
<div style="position:absolute;left:722px;top:98px;width:1px;height:14px;background:#ACA899"></div>
<div style="position:absolute;left:723px;top:98px;width:1px;height:14px;background:#FFFFFF"></div>
<svg style="position:absolute;left:725px;top:104px;" width="8" height="4" viewBox="0 0 8 4" shape-rendering="crispEdges"><path d="M0 0 H7 L3.5 4 Z" fill="#000"/></svg>
<div style="position:absolute;left:722px;top:114px;width:1px;height:14px;background:#ACA899"></div>
<div style="position:absolute;left:723px;top:114px;width:1px;height:14px;background:#FFFFFF"></div>
<svg style="position:absolute;left:725px;top:120px;" width="8" height="4" viewBox="0 0 8 4" shape-rendering="crispEdges"><path d="M0 0 H7 L3.5 4 Z" fill="#000"/></svg>
<div style="position:absolute;left:927px;top:98px;width:1px;height:14px;background:#ACA899"></div>
<div style="position:absolute;left:928px;top:98px;width:1px;height:14px;background:#FFFFFF"></div>
<svg style="position:absolute;left:930px;top:104px;" width="8" height="4" viewBox="0 0 8 4" shape-rendering="crispEdges"><path d="M0 0 H7 L3.5 4 Z" fill="#000"/></svg>
<div style="position:absolute;left:0px;top:137px;width:120px;height:595px;background:#C0C0C0"></div>
<div style="position:absolute;left:0px;top:137px;width:1px;height:595px;background:#ACA899"></div>
<div style="position:absolute;left:119px;top:137px;width:1px;height:595px;background:#ACA899"></div>
<div style="position:absolute;left:0px;top:137px;width:120px;height:1px;background:#ACA899"></div>
<div style="position:absolute;left:1px;top:165px;width:118px;height:1px;background:#ACA899"></div>
<div style="position:absolute;left:11px;top:142px;height:18px;line-height:18px;white-space:nowrap;font-size:12px;">通道名稱</div>
<svg style="position:absolute;left:0px;top:166px;" width="120" height="566" viewBox="0 0 120 566" shape-rendering="crispEdges">
<rect x="8.5" y="18.5" width="12" height="12" fill="none" stroke="#ACA899"/>
<path d="M10 24.5 H19" stroke="#000"/>
<path d="M22 24.5 H29" stroke="#A8A490" stroke-dasharray="1 1"/>
<path d="M30 26.5 H57" stroke="#808080"/>
<path d="M14.5 32 V566" stroke="#A8A898" stroke-dasharray="1 1"/>
<path d="M43.5 50 V424" stroke="#A8A898" stroke-dasharray="1 1"/>
</svg>
<svg style="position:absolute;left:44px;top:242px;" width="16" height="1" viewBox="0 0 16 1" shape-rendering="crispEdges"><path d="M0 0.5 H15" stroke="#A8A898" stroke-dasharray="1 1"/></svg>
<svg style="position:absolute;left:74px;top:234px;shape-rendering:auto" width="12" height="12" viewBox="0 0 12 12" shape-rendering="crispEdges"><path d="M1.5 11 Q0 10 1 8.5 L5.5 4.5 L7 4 L10.5 0.8 L11.3 1.6 L8 5 L7.5 6.5 L3.5 10.5 Q2.5 11.5 1.5 11 Z" fill="#800000"/></svg>
<div style="position:absolute;left:88px;top:216px;width:18px;height:49px;background:#0A64F0"></div>
<div style="position:absolute;left:90px;top:232px;height:18px;line-height:18px;white-space:nowrap;font-family:'Liberation Serif', serif;font-size:12px;color:#fff;">A0</div>
<div style="position:absolute;left:109px;top:232px;width:10px;height:18px;overflow:hidden;line-height:18px;white-space:nowrap;font-family:'Liberation Serif', serif;font-size:12px;color:#8C8C8C">A0</div>
<svg style="position:absolute;left:44px;top:292px;" width="16" height="1" viewBox="0 0 16 1" shape-rendering="crispEdges"><path d="M0 0.5 H15" stroke="#A8A898" stroke-dasharray="1 1"/></svg>
<svg style="position:absolute;left:74px;top:284px;shape-rendering:auto" width="12" height="12" viewBox="0 0 12 12" shape-rendering="crispEdges"><path d="M1.5 11 Q0 10 1 8.5 L5.5 4.5 L7 4 L10.5 0.8 L11.3 1.6 L8 5 L7.5 6.5 L3.5 10.5 Q2.5 11.5 1.5 11 Z" fill="#FF0000"/></svg>
<div style="position:absolute;left:90px;top:282px;height:18px;line-height:18px;white-space:nowrap;font-family:'Liberation Serif', serif;font-size:12px;color:#000;">A1</div>
<div style="position:absolute;left:109px;top:282px;width:10px;height:18px;overflow:hidden;line-height:18px;white-space:nowrap;font-family:'Liberation Serif', serif;font-size:12px;color:#8C8C8C">A1</div>
<svg style="position:absolute;left:44px;top:342px;" width="16" height="1" viewBox="0 0 16 1" shape-rendering="crispEdges"><path d="M0 0.5 H15" stroke="#A8A898" stroke-dasharray="1 1"/></svg>
<svg style="position:absolute;left:74px;top:334px;shape-rendering:auto" width="12" height="12" viewBox="0 0 12 12" shape-rendering="crispEdges"><path d="M1.5 11 Q0 10 1 8.5 L5.5 4.5 L7 4 L10.5 0.8 L11.3 1.6 L8 5 L7.5 6.5 L3.5 10.5 Q2.5 11.5 1.5 11 Z" fill="#D05818"/></svg>
<div style="position:absolute;left:90px;top:332px;height:18px;line-height:18px;white-space:nowrap;font-family:'Liberation Serif', serif;font-size:12px;color:#000;">A2</div>
<div style="position:absolute;left:109px;top:332px;width:10px;height:18px;overflow:hidden;line-height:18px;white-space:nowrap;font-family:'Liberation Serif', serif;font-size:12px;color:#8C8C8C">A2</div>
<svg style="position:absolute;left:44px;top:392px;" width="16" height="1" viewBox="0 0 16 1" shape-rendering="crispEdges"><path d="M0 0.5 H15" stroke="#A8A898" stroke-dasharray="1 1"/></svg>
<svg style="position:absolute;left:74px;top:384px;shape-rendering:auto" width="12" height="12" viewBox="0 0 12 12" shape-rendering="crispEdges"><path d="M1.5 11 Q0 10 1 8.5 L5.5 4.5 L7 4 L10.5 0.8 L11.3 1.6 L8 5 L7.5 6.5 L3.5 10.5 Q2.5 11.5 1.5 11 Z" fill="#FFFF00"/></svg>
<div style="position:absolute;left:90px;top:382px;height:18px;line-height:18px;white-space:nowrap;font-family:'Liberation Serif', serif;font-size:12px;color:#000;">A3</div>
<div style="position:absolute;left:109px;top:382px;width:10px;height:18px;overflow:hidden;line-height:18px;white-space:nowrap;font-family:'Liberation Serif', serif;font-size:12px;color:#8C8C8C">A3</div>
<svg style="position:absolute;left:44px;top:442px;" width="16" height="1" viewBox="0 0 16 1" shape-rendering="crispEdges"><path d="M0 0.5 H15" stroke="#A8A898" stroke-dasharray="1 1"/></svg>
<svg style="position:absolute;left:74px;top:434px;shape-rendering:auto" width="12" height="12" viewBox="0 0 12 12" shape-rendering="crispEdges"><path d="M1.5 11 Q0 10 1 8.5 L5.5 4.5 L7 4 L10.5 0.8 L11.3 1.6 L8 5 L7.5 6.5 L3.5 10.5 Q2.5 11.5 1.5 11 Z" fill="#00E000"/></svg>
<div style="position:absolute;left:90px;top:432px;height:18px;line-height:18px;white-space:nowrap;font-family:'Liberation Serif', serif;font-size:12px;color:#000;">A4</div>
<div style="position:absolute;left:109px;top:432px;width:10px;height:18px;overflow:hidden;line-height:18px;white-space:nowrap;font-family:'Liberation Serif', serif;font-size:12px;color:#8C8C8C">A4</div>
<svg style="position:absolute;left:44px;top:492px;" width="16" height="1" viewBox="0 0 16 1" shape-rendering="crispEdges"><path d="M0 0.5 H15" stroke="#A8A898" stroke-dasharray="1 1"/></svg>
<svg style="position:absolute;left:74px;top:484px;shape-rendering:auto" width="12" height="12" viewBox="0 0 12 12" shape-rendering="crispEdges"><path d="M1.5 11 Q0 10 1 8.5 L5.5 4.5 L7 4 L10.5 0.8 L11.3 1.6 L8 5 L7.5 6.5 L3.5 10.5 Q2.5 11.5 1.5 11 Z" fill="#0000E0"/></svg>
<div style="position:absolute;left:90px;top:482px;height:18px;line-height:18px;white-space:nowrap;font-family:'Liberation Serif', serif;font-size:12px;color:#000;">A5</div>
<div style="position:absolute;left:109px;top:482px;width:10px;height:18px;overflow:hidden;line-height:18px;white-space:nowrap;font-family:'Liberation Serif', serif;font-size:12px;color:#8C8C8C">A5</div>
<svg style="position:absolute;left:44px;top:542px;" width="16" height="1" viewBox="0 0 16 1" shape-rendering="crispEdges"><path d="M0 0.5 H15" stroke="#A8A898" stroke-dasharray="1 1"/></svg>
<svg style="position:absolute;left:74px;top:534px;shape-rendering:auto" width="12" height="12" viewBox="0 0 12 12" shape-rendering="crispEdges"><path d="M1.5 11 Q0 10 1 8.5 L5.5 4.5 L7 4 L10.5 0.8 L11.3 1.6 L8 5 L7.5 6.5 L3.5 10.5 Q2.5 11.5 1.5 11 Z" fill="#8000A0"/></svg>
<div style="position:absolute;left:90px;top:532px;height:18px;line-height:18px;white-space:nowrap;font-family:'Liberation Serif', serif;font-size:12px;color:#000;">A6</div>
<div style="position:absolute;left:109px;top:532px;width:10px;height:18px;overflow:hidden;line-height:18px;white-space:nowrap;font-family:'Liberation Serif', serif;font-size:12px;color:#8C8C8C">A6</div>
<svg style="position:absolute;left:44px;top:592px;" width="16" height="1" viewBox="0 0 16 1" shape-rendering="crispEdges"><path d="M0 0.5 H15" stroke="#A8A898" stroke-dasharray="1 1"/></svg>
<svg style="position:absolute;left:74px;top:584px;shape-rendering:auto" width="12" height="12" viewBox="0 0 12 12" shape-rendering="crispEdges"><path d="M1.5 11 Q0 10 1 8.5 L5.5 4.5 L7 4 L10.5 0.8 L11.3 1.6 L8 5 L7.5 6.5 L3.5 10.5 Q2.5 11.5 1.5 11 Z" fill="#808080"/></svg>
<div style="position:absolute;left:90px;top:582px;height:18px;line-height:18px;white-space:nowrap;font-family:'Liberation Serif', serif;font-size:12px;color:#000;">A7</div>
<div style="position:absolute;left:109px;top:582px;width:10px;height:18px;overflow:hidden;line-height:18px;white-space:nowrap;font-family:'Liberation Serif', serif;font-size:12px;color:#8C8C8C">A7</div>
<svg style="position:absolute;left:15px;top:642px;" width="16" height="1" viewBox="0 0 16 1" shape-rendering="crispEdges"><path d="M0 0.5 H15" stroke="#A8A898" stroke-dasharray="1 1"/></svg>
<svg style="position:absolute;left:45px;top:634px;shape-rendering:auto" width="12" height="12" viewBox="0 0 12 12" shape-rendering="crispEdges"><path d="M1.5 11 Q0 10 1 8.5 L5.5 4.5 L7 4 L10.5 0.8 L11.3 1.6 L8 5 L7.5 6.5 L3.5 10.5 Q2.5 11.5 1.5 11 Z" fill="#800000"/></svg>
<div style="position:absolute;left:61px;top:632px;height:18px;line-height:18px;white-space:nowrap;font-family:'Liberation Serif', serif;font-size:12px;color:#000;">B0</div>
<div style="position:absolute;left:80px;top:632px;width:39px;height:18px;overflow:hidden;line-height:18px;white-space:nowrap;font-family:'Liberation Serif', serif;font-size:12px;color:#8C8C8C">B0</div>
<svg style="position:absolute;left:15px;top:692px;" width="16" height="1" viewBox="0 0 16 1" shape-rendering="crispEdges"><path d="M0 0.5 H15" stroke="#A8A898" stroke-dasharray="1 1"/></svg>
<svg style="position:absolute;left:45px;top:684px;shape-rendering:auto" width="12" height="12" viewBox="0 0 12 12" shape-rendering="crispEdges"><path d="M1.5 11 Q0 10 1 8.5 L5.5 4.5 L7 4 L10.5 0.8 L11.3 1.6 L8 5 L7.5 6.5 L3.5 10.5 Q2.5 11.5 1.5 11 Z" fill="#FF0000"/></svg>
<div style="position:absolute;left:61px;top:682px;height:18px;line-height:18px;white-space:nowrap;font-family:'Liberation Serif', serif;font-size:12px;color:#000;">B1</div>
<div style="position:absolute;left:80px;top:682px;width:39px;height:18px;overflow:hidden;line-height:18px;white-space:nowrap;font-family:'Liberation Serif', serif;font-size:12px;color:#8C8C8C">B1</div>
<div style="position:absolute;left:61px;top:182px;height:18px;line-height:18px;white-space:nowrap;font-family:'Liberation Serif', serif;font-size:12px;">Bus1</div>
<div style="position:absolute;left:120px;top:137px;width:127px;height:595px;background:#F3F0E5"></div>
<div style="position:absolute;left:123px;top:137px;width:1px;height:595px;background:#A8A490"></div>
<div style="position:absolute;left:182px;top:137px;width:1px;height:595px;background:#A8A490"></div>
<div style="position:absolute;left:123px;top:137px;width:60px;height:1px;background:#A8A490"></div>
<div style="position:absolute;left:124px;top:138px;width:58px;height:27px;background:#ECE9D8;border-top:1px solid #F6F4EA;border-left:1px solid #F6F4EA;box-sizing:border-box"></div>
<div style="position:absolute;left:124px;top:165px;width:58px;height:1px;background:#A8A490"></div>
<div style="position:absolute;left:129px;top:142px;height:18px;line-height:18px;white-space:nowrap;font-size:12px;">觸發條件</div>
<div style="position:absolute;left:124px;top:166px;width:55px;height:47px;background:#ECE9D8;border-left:1px solid #A8A490;border-top:1px solid #A8A490;border-right:1px solid #A8A490;border-bottom:1px solid #A8A490;"></div>
<div style="position:absolute;left:124px;top:216px;width:55px;height:47px;background:#ECE9D8;border-left:1px solid #000;border-top:1px solid #000;border-right:2px solid #fff;border-bottom:2px solid #fff;"></div>
<div style="position:absolute;left:172px;top:217px;width:1px;height:47px;background:#A8A490"></div>
<svg style="position:absolute;left:174px;top:241px;" width="7" height="4" viewBox="0 0 7 4" shape-rendering="crispEdges"><path d="M0 0 H6 L3 4 Z" fill="#000"/></svg>
<svg style="position:absolute;left:146px;top:234px;" width="14" height="14" viewBox="0 0 14 14" shape-rendering="crispEdges"><rect x="0.5" y="0.5" width="12" height="12" fill="#C4C4C4" stroke="#808080" stroke-dasharray="1 1"/><path d="M1 11 H5 L9 3 H13" stroke="#000" stroke-width="2" fill="none" shape-rendering="auto"/></svg>
<div style="position:absolute;left:124px;top:266px;width:55px;height:47px;background:#ECE9D8;border-left:1px solid #A8A490;border-top:1px solid #A8A490;border-right:1px solid #A8A490;border-bottom:1px solid #A8A490;"></div>
<svg style="position:absolute;left:146px;top:284px;" width="14" height="14" viewBox="0 0 14 14" shape-rendering="crispEdges"><rect x="0.5" y="0.5" width="12" height="12" fill="#C4C4C4" stroke="#808080" stroke-dasharray="1 1"/><path d="M1 1 L12 12 M12 1 L1 12" stroke="#8C8C8C" shape-rendering="auto"/></svg>
<div style="position:absolute;left:124px;top:316px;width:55px;height:47px;background:#ECE9D8;border-left:1px solid #A8A490;border-top:1px solid #A8A490;border-right:1px solid #A8A490;border-bottom:1px solid #A8A490;"></div>
<svg style="position:absolute;left:146px;top:334px;" width="14" height="14" viewBox="0 0 14 14" shape-rendering="crispEdges"><rect x="0.5" y="0.5" width="12" height="12" fill="#C4C4C4" stroke="#808080" stroke-dasharray="1 1"/><path d="M1 1 L12 12 M12 1 L1 12" stroke="#8C8C8C" shape-rendering="auto"/></svg>
<div style="position:absolute;left:124px;top:366px;width:55px;height:47px;background:#ECE9D8;border-left:1px solid #A8A490;border-top:1px solid #A8A490;border-right:1px solid #A8A490;border-bottom:1px solid #A8A490;"></div>
<svg style="position:absolute;left:146px;top:384px;" width="14" height="14" viewBox="0 0 14 14" shape-rendering="crispEdges"><rect x="0.5" y="0.5" width="12" height="12" fill="#C4C4C4" stroke="#808080" stroke-dasharray="1 1"/><path d="M1 1 L12 12 M12 1 L1 12" stroke="#8C8C8C" shape-rendering="auto"/></svg>
<div style="position:absolute;left:124px;top:416px;width:55px;height:47px;background:#ECE9D8;border-left:1px solid #A8A490;border-top:1px solid #A8A490;border-right:1px solid #A8A490;border-bottom:1px solid #A8A490;"></div>
<svg style="position:absolute;left:146px;top:434px;" width="14" height="14" viewBox="0 0 14 14" shape-rendering="crispEdges"><rect x="0.5" y="0.5" width="12" height="12" fill="#C4C4C4" stroke="#808080" stroke-dasharray="1 1"/><path d="M1 1 L12 12 M12 1 L1 12" stroke="#8C8C8C" shape-rendering="auto"/></svg>
<div style="position:absolute;left:124px;top:466px;width:55px;height:47px;background:#ECE9D8;border-left:1px solid #A8A490;border-top:1px solid #A8A490;border-right:1px solid #A8A490;border-bottom:1px solid #A8A490;"></div>
<svg style="position:absolute;left:146px;top:484px;" width="14" height="14" viewBox="0 0 14 14" shape-rendering="crispEdges"><rect x="0.5" y="0.5" width="12" height="12" fill="#C4C4C4" stroke="#808080" stroke-dasharray="1 1"/><path d="M1 1 L12 12 M12 1 L1 12" stroke="#8C8C8C" shape-rendering="auto"/></svg>
<div style="position:absolute;left:124px;top:516px;width:55px;height:47px;background:#ECE9D8;border-left:1px solid #A8A490;border-top:1px solid #A8A490;border-right:1px solid #A8A490;border-bottom:1px solid #A8A490;"></div>
<svg style="position:absolute;left:146px;top:534px;" width="14" height="14" viewBox="0 0 14 14" shape-rendering="crispEdges"><rect x="0.5" y="0.5" width="12" height="12" fill="#C4C4C4" stroke="#808080" stroke-dasharray="1 1"/><path d="M1 1 L12 12 M12 1 L1 12" stroke="#8C8C8C" shape-rendering="auto"/></svg>
<div style="position:absolute;left:124px;top:566px;width:55px;height:47px;background:#ECE9D8;border-left:1px solid #A8A490;border-top:1px solid #A8A490;border-right:1px solid #A8A490;border-bottom:1px solid #A8A490;"></div>
<svg style="position:absolute;left:146px;top:584px;" width="14" height="14" viewBox="0 0 14 14" shape-rendering="crispEdges"><rect x="0.5" y="0.5" width="12" height="12" fill="#C4C4C4" stroke="#808080" stroke-dasharray="1 1"/><path d="M1 1 L12 12 M12 1 L1 12" stroke="#8C8C8C" shape-rendering="auto"/></svg>
<div style="position:absolute;left:124px;top:616px;width:55px;height:47px;background:#ECE9D8;border-left:1px solid #A8A490;border-top:1px solid #A8A490;border-right:1px solid #A8A490;border-bottom:1px solid #A8A490;"></div>
<svg style="position:absolute;left:146px;top:634px;" width="14" height="14" viewBox="0 0 14 14" shape-rendering="crispEdges"><rect x="0.5" y="0.5" width="12" height="12" fill="#C4C4C4" stroke="#808080" stroke-dasharray="1 1"/><path d="M1 1 L12 12 M12 1 L1 12" stroke="#8C8C8C" shape-rendering="auto"/></svg>
<div style="position:absolute;left:124px;top:666px;width:55px;height:47px;background:#ECE9D8;border-left:1px solid #A8A490;border-top:1px solid #A8A490;border-right:1px solid #A8A490;border-bottom:1px solid #A8A490;"></div>
<svg style="position:absolute;left:146px;top:684px;" width="14" height="14" viewBox="0 0 14 14" shape-rendering="crispEdges"><rect x="0.5" y="0.5" width="12" height="12" fill="#C4C4C4" stroke="#808080" stroke-dasharray="1 1"/><path d="M1 1 L12 12 M12 1 L1 12" stroke="#8C8C8C" shape-rendering="auto"/></svg>
<div style="position:absolute;left:124px;top:716px;width:55px;height:15px;background:#ECE9D8;border-left:1px solid #A8A490;border-top:1px solid #A8A490;border-right:1px solid #A8A490;"></div>
<div style="position:absolute;left:186px;top:137px;width:1px;height:595px;background:#A8A490"></div>
<div style="position:absolute;left:242px;top:137px;width:1px;height:595px;background:#A8A490"></div>
<div style="position:absolute;left:186px;top:137px;width:57px;height:1px;background:#A8A490"></div>
<div style="position:absolute;left:187px;top:138px;width:55px;height:27px;background:#ECE9D8;border-top:1px solid #F6F4EA;border-left:1px solid #F6F4EA;box-sizing:border-box"></div>
<div style="position:absolute;left:187px;top:165px;width:55px;height:1px;background:#A8A490"></div>
<div style="position:absolute;left:192px;top:142px;height:18px;line-height:18px;white-space:nowrap;font-size:12px;">濾波條件</div>
<div style="position:absolute;left:188px;top:166px;width:51px;height:47px;background:#ECE9D8;border-left:1px solid #A8A490;border-top:1px solid #A8A490;border-right:1px solid #A8A490;border-bottom:1px solid #A8A490;"></div>
<svg style="position:absolute;left:208px;top:184px;" width="14" height="14" viewBox="0 0 14 14" shape-rendering="crispEdges"><rect x="0.5" y="0.5" width="12" height="12" fill="#C4C4C4" stroke="#808080" stroke-dasharray="1 1"/><path d="M1 1 L12 12 M12 1 L1 12" stroke="#8C8C8C" shape-rendering="auto"/></svg>
<div style="position:absolute;left:188px;top:216px;width:51px;height:47px;background:#ECE9D8;border-left:1px solid #000;border-top:1px solid #000;border-right:2px solid #fff;border-bottom:2px solid #fff;"></div>
<div style="position:absolute;left:232px;top:217px;width:1px;height:47px;background:#A8A490"></div>
<svg style="position:absolute;left:234px;top:241px;" width="7" height="4" viewBox="0 0 7 4" shape-rendering="crispEdges"><path d="M0 0 H6 L3 4 Z" fill="#000"/></svg>
<svg style="position:absolute;left:208px;top:234px;" width="14" height="14" viewBox="0 0 14 14" shape-rendering="crispEdges"><rect x="0.5" y="0.5" width="12" height="12" fill="#C4C4C4" stroke="#808080" stroke-dasharray="1 1"/><path d="M1 1 L12 12 M12 1 L1 12" stroke="#8C8C8C" shape-rendering="auto"/></svg>
<div style="position:absolute;left:188px;top:266px;width:51px;height:47px;background:#ECE9D8;border-left:1px solid #A8A490;border-top:1px solid #A8A490;border-right:1px solid #A8A490;border-bottom:1px solid #A8A490;"></div>
<svg style="position:absolute;left:208px;top:284px;" width="14" height="14" viewBox="0 0 14 14" shape-rendering="crispEdges"><rect x="0.5" y="0.5" width="12" height="12" fill="#C4C4C4" stroke="#808080" stroke-dasharray="1 1"/><path d="M1 1 L12 12 M12 1 L1 12" stroke="#8C8C8C" shape-rendering="auto"/></svg>
<div style="position:absolute;left:188px;top:316px;width:51px;height:47px;background:#ECE9D8;border-left:1px solid #A8A490;border-top:1px solid #A8A490;border-right:1px solid #A8A490;border-bottom:1px solid #A8A490;"></div>
<svg style="position:absolute;left:208px;top:334px;" width="14" height="14" viewBox="0 0 14 14" shape-rendering="crispEdges"><rect x="0.5" y="0.5" width="12" height="12" fill="#C4C4C4" stroke="#808080" stroke-dasharray="1 1"/><path d="M1 1 L12 12 M12 1 L1 12" stroke="#8C8C8C" shape-rendering="auto"/></svg>
<div style="position:absolute;left:188px;top:366px;width:51px;height:47px;background:#ECE9D8;border-left:1px solid #A8A490;border-top:1px solid #A8A490;border-right:1px solid #A8A490;border-bottom:1px solid #A8A490;"></div>
<svg style="position:absolute;left:208px;top:384px;" width="14" height="14" viewBox="0 0 14 14" shape-rendering="crispEdges"><rect x="0.5" y="0.5" width="12" height="12" fill="#C4C4C4" stroke="#808080" stroke-dasharray="1 1"/><path d="M1 1 L12 12 M12 1 L1 12" stroke="#8C8C8C" shape-rendering="auto"/></svg>
<div style="position:absolute;left:188px;top:416px;width:51px;height:47px;background:#ECE9D8;border-left:1px solid #A8A490;border-top:1px solid #A8A490;border-right:1px solid #A8A490;border-bottom:1px solid #A8A490;"></div>
<svg style="position:absolute;left:208px;top:434px;" width="14" height="14" viewBox="0 0 14 14" shape-rendering="crispEdges"><rect x="0.5" y="0.5" width="12" height="12" fill="#C4C4C4" stroke="#808080" stroke-dasharray="1 1"/><path d="M1 1 L12 12 M12 1 L1 12" stroke="#8C8C8C" shape-rendering="auto"/></svg>
<div style="position:absolute;left:188px;top:466px;width:51px;height:47px;background:#ECE9D8;border-left:1px solid #A8A490;border-top:1px solid #A8A490;border-right:1px solid #A8A490;border-bottom:1px solid #A8A490;"></div>
<svg style="position:absolute;left:208px;top:484px;" width="14" height="14" viewBox="0 0 14 14" shape-rendering="crispEdges"><rect x="0.5" y="0.5" width="12" height="12" fill="#C4C4C4" stroke="#808080" stroke-dasharray="1 1"/><path d="M1 1 L12 12 M12 1 L1 12" stroke="#8C8C8C" shape-rendering="auto"/></svg>
<div style="position:absolute;left:188px;top:516px;width:51px;height:47px;background:#ECE9D8;border-left:1px solid #A8A490;border-top:1px solid #A8A490;border-right:1px solid #A8A490;border-bottom:1px solid #A8A490;"></div>
<svg style="position:absolute;left:208px;top:534px;" width="14" height="14" viewBox="0 0 14 14" shape-rendering="crispEdges"><rect x="0.5" y="0.5" width="12" height="12" fill="#C4C4C4" stroke="#808080" stroke-dasharray="1 1"/><path d="M1 1 L12 12 M12 1 L1 12" stroke="#8C8C8C" shape-rendering="auto"/></svg>
<div style="position:absolute;left:188px;top:566px;width:51px;height:47px;background:#ECE9D8;border-left:1px solid #A8A490;border-top:1px solid #A8A490;border-right:1px solid #A8A490;border-bottom:1px solid #A8A490;"></div>
<svg style="position:absolute;left:208px;top:584px;" width="14" height="14" viewBox="0 0 14 14" shape-rendering="crispEdges"><rect x="0.5" y="0.5" width="12" height="12" fill="#C4C4C4" stroke="#808080" stroke-dasharray="1 1"/><path d="M1 1 L12 12 M12 1 L1 12" stroke="#8C8C8C" shape-rendering="auto"/></svg>
<div style="position:absolute;left:188px;top:616px;width:51px;height:47px;background:#ECE9D8;border-left:1px solid #A8A490;border-top:1px solid #A8A490;border-right:1px solid #A8A490;border-bottom:1px solid #A8A490;"></div>
<svg style="position:absolute;left:208px;top:634px;" width="14" height="14" viewBox="0 0 14 14" shape-rendering="crispEdges"><rect x="0.5" y="0.5" width="12" height="12" fill="#C4C4C4" stroke="#808080" stroke-dasharray="1 1"/><path d="M1 1 L12 12 M12 1 L1 12" stroke="#8C8C8C" shape-rendering="auto"/></svg>
<div style="position:absolute;left:188px;top:666px;width:51px;height:47px;background:#ECE9D8;border-left:1px solid #A8A490;border-top:1px solid #A8A490;border-right:1px solid #A8A490;border-bottom:1px solid #A8A490;"></div>
<svg style="position:absolute;left:208px;top:684px;" width="14" height="14" viewBox="0 0 14 14" shape-rendering="crispEdges"><rect x="0.5" y="0.5" width="12" height="12" fill="#C4C4C4" stroke="#808080" stroke-dasharray="1 1"/><path d="M1 1 L12 12 M12 1 L1 12" stroke="#8C8C8C" shape-rendering="auto"/></svg>
<div style="position:absolute;left:188px;top:716px;width:51px;height:15px;background:#ECE9D8;border-left:1px solid #A8A490;border-top:1px solid #A8A490;border-right:1px solid #A8A490;"></div>
<div style="position:absolute;left:243px;top:398px;width:4px;height:15px;background:#B8C0D8"></div>
<svg style="position:absolute;left:243px;top:400px;shape-rendering:auto" width="4" height="11" viewBox="0 0 4 11" shape-rendering="crispEdges"><path d="M3.5 0.5 V10.5 L0 5.5 Z" fill="#000"/></svg>
<div style="position:absolute;left:247px;top:138px;width:759px;height:594px;background:#fff"></div>
<div style="position:absolute;left:247px;top:138px;width:759px;height:28px;background:#C0C0C0"></div>
<svg style="position:absolute;left:247px;top:138px;" width="759" height="594" viewBox="0 0 759 594" shape-rendering="crispEdges"><rect x="0" y="28" width="759" height="1" fill="#000"/><rect x="0" y="22" width="1" height="6" fill="#000"/><rect x="15" y="24" width="1" height="4" fill="#000"/><rect x="30" y="24" width="1" height="4" fill="#000"/><rect x="45" y="24" width="1" height="4" fill="#000"/><rect x="60" y="24" width="1" height="4" fill="#000"/><rect x="75" y="22" width="1" height="6" fill="#000"/><rect x="90" y="24" width="1" height="4" fill="#000"/><rect x="105" y="24" width="1" height="4" fill="#000"/><rect x="120" y="24" width="1" height="4" fill="#000"/><rect x="135" y="24" width="1" height="4" fill="#000"/><rect x="150" y="22" width="1" height="6" fill="#000"/><rect x="165" y="24" width="1" height="4" fill="#000"/><rect x="180" y="24" width="1" height="4" fill="#000"/><rect x="195" y="24" width="1" height="4" fill="#000"/><rect x="210" y="24" width="1" height="4" fill="#000"/><rect x="225" y="22" width="1" height="6" fill="#000"/><rect x="240" y="24" width="1" height="4" fill="#000"/><rect x="255" y="24" width="1" height="4" fill="#000"/><rect x="270" y="24" width="1" height="4" fill="#000"/><rect x="285" y="24" width="1" height="4" fill="#000"/><rect x="300" y="22" width="1" height="6" fill="#000"/><rect x="315" y="24" width="1" height="4" fill="#000"/><rect x="330" y="24" width="1" height="4" fill="#000"/><rect x="345" y="24" width="1" height="4" fill="#000"/><rect x="360" y="24" width="1" height="4" fill="#000"/><rect x="375" y="22" width="1" height="6" fill="#000"/><rect x="390" y="24" width="1" height="4" fill="#000"/><rect x="405" y="24" width="1" height="4" fill="#000"/><rect x="420" y="24" width="1" height="4" fill="#000"/><rect x="435" y="24" width="1" height="4" fill="#000"/><rect x="450" y="22" width="1" height="6" fill="#000"/><rect x="465" y="24" width="1" height="4" fill="#000"/><rect x="480" y="24" width="1" height="4" fill="#000"/><rect x="495" y="24" width="1" height="4" fill="#000"/><rect x="510" y="24" width="1" height="4" fill="#000"/><rect x="525" y="22" width="1" height="6" fill="#000"/><rect x="540" y="24" width="1" height="4" fill="#000"/><rect x="555" y="24" width="1" height="4" fill="#000"/><rect x="570" y="24" width="1" height="4" fill="#000"/><rect x="585" y="24" width="1" height="4" fill="#000"/><rect x="600" y="22" width="1" height="6" fill="#000"/><rect x="615" y="24" width="1" height="4" fill="#000"/><rect x="630" y="24" width="1" height="4" fill="#000"/><rect x="645" y="24" width="1" height="4" fill="#000"/><rect x="660" y="24" width="1" height="4" fill="#000"/><rect x="675" y="22" width="1" height="6" fill="#000"/><rect x="690" y="24" width="1" height="4" fill="#000"/><rect x="705" y="24" width="1" height="4" fill="#000"/><rect x="720" y="24" width="1" height="4" fill="#000"/><rect x="735" y="24" width="1" height="4" fill="#000"/><rect x="750" y="22" width="1" height="6" fill="#000"/><rect x="0" y="28" width="1" height="566" fill="#1A7CF0"/><rect x="0" y="12" width="1" height="4" fill="#1A7CF0"/></svg>
<div style="position:absolute;left:284px;top:148px;width:80px;height:11px;line-height:11px;text-align:center;font-family:'Liberation Serif', serif;font-size:10px;white-space:nowrap">-389.5ns</div>
<div style="position:absolute;left:359px;top:148px;width:80px;height:11px;line-height:11px;text-align:center;font-family:'Liberation Serif', serif;font-size:10px;white-space:nowrap">1.658us</div>
<div style="position:absolute;left:434px;top:148px;width:80px;height:11px;line-height:11px;text-align:center;font-family:'Liberation Serif', serif;font-size:10px;white-space:nowrap">3.705us</div>
<div style="position:absolute;left:509px;top:148px;width:80px;height:11px;line-height:11px;text-align:center;font-family:'Liberation Serif', serif;font-size:10px;white-space:nowrap">5.753us</div>
<div style="position:absolute;left:584px;top:148px;width:80px;height:11px;line-height:11px;text-align:center;font-family:'Liberation Serif', serif;font-size:10px;white-space:nowrap">7.8us</div>
<div style="position:absolute;left:659px;top:148px;width:80px;height:11px;line-height:11px;text-align:center;font-family:'Liberation Serif', serif;font-size:10px;white-space:nowrap">9.848us</div>
<div style="position:absolute;left:734px;top:148px;width:80px;height:11px;line-height:11px;text-align:center;font-family:'Liberation Serif', serif;font-size:10px;white-space:nowrap">11.895us</div>
<div style="position:absolute;left:809px;top:148px;width:80px;height:11px;line-height:11px;text-align:center;font-family:'Liberation Serif', serif;font-size:10px;white-space:nowrap">13.943us</div>
<div style="position:absolute;left:884px;top:148px;width:80px;height:11px;line-height:11px;text-align:center;font-family:'Liberation Serif', serif;font-size:10px;white-space:nowrap">15.99us</div>
<div style="position:absolute;left:982px;top:148px;width:24px;height:11px;line-height:11px;overflow:hidden;font-family:'Liberation Serif', serif;font-size:10px;white-space:nowrap">18.042us</div>
<svg style="position:absolute;left:247px;top:138px;" width="11" height="14" viewBox="0 0 11 14" shape-rendering="crispEdges"><rect x="0" y="0" width="9" height="12" fill="#0A84F8"/><rect x="9" y="0" width="1" height="13" fill="#000"/><rect x="2" y="12" width="8" height="1" fill="#000"/><path d="M2 3.5 H5 M4 3.5 V8 H2.5 V6.5" stroke="#F08010" stroke-width="1.2" fill="none"/></svg>
<svg style="position:absolute;left:330px;top:138px;" width="13" height="13" viewBox="0 0 13 13" shape-rendering="crispEdges"><rect x="0" y="0" width="11" height="12" fill="#FF0000"/><rect x="11" y="1" width="1" height="12" fill="#000"/><rect x="1" y="12" width="11" height="1" fill="#000"/><path d="M3 1.5 H8 M5.5 1.5 V9.5 M3 9.5 H8" stroke="#20E0F0"/></svg>
<svg style="position:absolute;left:617px;top:138px;shape-rendering:auto" width="11" height="7" viewBox="0 0 11 7" shape-rendering="crispEdges"><path d="M0 0 H11 L5.5 6 Z" fill="#FF0000"/></svg>
<svg style="position:absolute;left:997px;top:138px;" width="9" height="19" viewBox="0 0 9 19" shape-rendering="crispEdges"><rect x="3" y="0" width="6" height="3" fill="#FFFF00"/><rect x="3" y="3" width="6" height="3" fill="#00F8F8"/><rect x="6" y="4" width="2" height="2" fill="#f00"/><rect x="0" y="6" width="9" height="12" fill="#0A84F8"/><rect x="0" y="18" width="9" height="1" fill="#000"/><path d="M3 8.5 H6 Q8.5 8.5 8.5 12 Q8.5 15.5 6 15.5 H3 M4.5 8.5 V15.5" stroke="#F08010" stroke-width="1.1" fill="none" shape-rendering="auto"/></svg>
<svg style="position:absolute;left:0;top:0" width="1006" height="732" viewBox="0 0 1006 732" shape-rendering="crispEdges"><defs><clipPath id="wc"><rect x="248" y="167" width="758" height="565"/></clipPath></defs><g clip-path="url(#wc)"><path d="M251.5 169.5 H332.5 L336.5 191.5 L332.5 213.5 H251.5 L248.5 191.5 Z" fill="none" stroke="#008000"/><path d="M339.5 169.5 H409.5 L413.5 191.5 L409.5 213.5 H339.5 L336.5 191.5 Z" fill="none" stroke="#008000"/><path d="M416.5 169.5 H486.5 L490.5 191.5 L486.5 213.5 H416.5 L413.5 191.5 Z" fill="none" stroke="#008000"/><path d="M493.5 169.5 H563.5 L567.5 191.5 L563.5 213.5 H493.5 L490.5 191.5 Z" fill="none" stroke="#008000"/><path d="M570.5 169.5 H639.5 L643.5 191.5 L639.5 213.5 H570.5 L567.5 191.5 Z" fill="none" stroke="#008000"/><path d="M646.5 169.5 H716.5 L720.5 191.5 L716.5 213.5 H646.5 L643.5 191.5 Z" fill="none" stroke="#008000"/><path d="M723.5 169.5 H793.5 L797.5 191.5 L793.5 213.5 H723.5 L720.5 191.5 Z" fill="none" stroke="#008000"/><path d="M800.5 169.5 H870.5 L874.5 191.5 L870.5 213.5 H800.5 L797.5 191.5 Z" fill="none" stroke="#008000"/><path d="M877.5 169.5 H947.5 L951.5 191.5 L947.5 213.5 H877.5 L874.5 191.5 Z" fill="none" stroke="#008000"/><path d="M954.5 169.5 H1024.5 L1028.5 191.5 L1024.5 213.5 H954.5 L951.5 191.5 Z" fill="none" stroke="#008000"/><rect x="245" y="263" width="92" height="1" fill="#800000"/><rect x="336" y="218" width="1" height="46" fill="#800000"/><rect x="336" y="218" width="78" height="2" fill="#800000"/><rect x="413" y="218" width="1" height="46" fill="#800000"/><rect x="413" y="263" width="78" height="1" fill="#800000"/><rect x="490" y="218" width="1" height="46" fill="#800000"/><rect x="490" y="218" width="78" height="2" fill="#800000"/><rect x="567" y="218" width="1" height="46" fill="#800000"/><rect x="567" y="263" width="77" height="1" fill="#800000"/><rect x="643" y="218" width="1" height="46" fill="#800000"/><rect x="643" y="218" width="78" height="2" fill="#800000"/><rect x="720" y="218" width="1" height="46" fill="#800000"/><rect x="720" y="263" width="78" height="1" fill="#800000"/><rect x="797" y="218" width="1" height="46" fill="#800000"/><rect x="797" y="218" width="78" height="2" fill="#800000"/><rect x="874" y="218" width="1" height="46" fill="#800000"/><rect x="874" y="263" width="78" height="1" fill="#800000"/><rect x="951" y="218" width="1" height="46" fill="#800000"/><rect x="951" y="218" width="58" height="2" fill="#800000"/><rect x="245" y="313" width="169" height="1" fill="#FF0000"/><rect x="413" y="268" width="1" height="46" fill="#FF0000"/><rect x="413" y="268" width="155" height="2" fill="#FF0000"/><rect x="567" y="268" width="1" height="46" fill="#FF0000"/><rect x="567" y="313" width="154" height="1" fill="#FF0000"/><rect x="720" y="268" width="1" height="46" fill="#FF0000"/><rect x="720" y="268" width="155" height="2" fill="#FF0000"/><rect x="874" y="268" width="1" height="46" fill="#FF0000"/><rect x="874" y="313" width="135" height="1" fill="#FF0000"/><rect x="245" y="363" width="323" height="1" fill="#FF8040"/><rect x="567" y="318" width="1" height="46" fill="#FF8040"/><rect x="567" y="318" width="308" height="2" fill="#FF8040"/><rect x="874" y="318" width="1" height="46" fill="#FF8040"/><rect x="874" y="363" width="135" height="1" fill="#FF8040"/><rect x="245" y="413" width="630" height="1" fill="#FFFF00"/><rect x="874" y="368" width="1" height="46" fill="#FFFF00"/><rect x="874" y="368" width="135" height="2" fill="#FFFF00"/><rect x="245" y="463" width="764" height="1" fill="#30F090"/><rect x="245" y="513" width="764" height="1" fill="#0000C0"/><rect x="245" y="563" width="764" height="1" fill="#FF20FF"/><rect x="245" y="613" width="764" height="1" fill="#808080"/><rect x="245" y="663" width="764" height="1" fill="#800000"/><rect x="245" y="713" width="764" height="1" fill="#FF0000"/><rect x="336" y="150" width="1" height="582" fill="#FF0000"/></g></svg>
<div style="position:absolute;left:255px;top:183px;width:100px;height:18px;line-height:18px;text-align:center;white-space:nowrap;font-family:'Liberation Serif', serif;font-size:16px;">0X00</div>
<div style="position:absolute;left:325px;top:183px;width:100px;height:18px;line-height:18px;text-align:center;white-space:nowrap;font-family:'Liberation Serif', serif;font-size:16px;">0X01</div>
<div style="position:absolute;left:402px;top:183px;width:100px;height:18px;line-height:18px;text-align:center;white-space:nowrap;font-family:'Liberation Serif', serif;font-size:16px;">0X02</div>
<div style="position:absolute;left:479px;top:183px;width:100px;height:18px;line-height:18px;text-align:center;white-space:nowrap;font-family:'Liberation Serif', serif;font-size:16px;">0X03</div>
<div style="position:absolute;left:555px;top:183px;width:100px;height:18px;line-height:18px;text-align:center;white-space:nowrap;font-family:'Liberation Serif', serif;font-size:16px;">0X04</div>
<div style="position:absolute;left:632px;top:183px;width:100px;height:18px;line-height:18px;text-align:center;white-space:nowrap;font-family:'Liberation Serif', serif;font-size:16px;">0X05</div>
<div style="position:absolute;left:709px;top:183px;width:100px;height:18px;line-height:18px;text-align:center;white-space:nowrap;font-family:'Liberation Serif', serif;font-size:16px;">0X06</div>
<div style="position:absolute;left:786px;top:183px;width:100px;height:18px;line-height:18px;text-align:center;white-space:nowrap;font-family:'Liberation Serif', serif;font-size:16px;">0X07</div>
<div style="position:absolute;left:863px;top:183px;width:100px;height:18px;line-height:18px;text-align:center;white-space:nowrap;font-family:'Liberation Serif', serif;font-size:16px;">0X08</div>
<div style="position:absolute;left:954px;top:183px;height:18px;line-height:18px;white-space:nowrap;font-family:'Liberation Serif', serif;font-size:16px;">0X09</div>
<div style="position:absolute;left:237px;top:241px;width:100px;height:18px;line-height:18px;text-align:center;white-space:nowrap;font-family:'Liberation Serif', serif;font-size:16px;">16.375us</div>
<div style="position:absolute;left:320px;top:241px;width:100px;height:18px;line-height:18px;text-align:center;white-space:nowrap;font-family:'Liberation Serif', serif;font-size:16px;">2.105us</div>
<div style="position:absolute;left:397px;top:241px;width:100px;height:18px;line-height:18px;text-align:center;white-space:nowrap;font-family:'Liberation Serif', serif;font-size:16px;">2.1us</div>
<div style="position:absolute;left:474px;top:241px;width:100px;height:18px;line-height:18px;text-align:center;white-space:nowrap;font-family:'Liberation Serif', serif;font-size:16px;">2.095us</div>
<div style="position:absolute;left:551px;top:241px;width:100px;height:18px;line-height:18px;text-align:center;white-space:nowrap;font-family:'Liberation Serif', serif;font-size:16px;">2.1us</div>
<div style="position:absolute;left:628px;top:241px;width:100px;height:18px;line-height:18px;text-align:center;white-space:nowrap;font-family:'Liberation Serif', serif;font-size:16px;">2.095us</div>
<div style="position:absolute;left:705px;top:241px;width:100px;height:18px;line-height:18px;text-align:center;white-space:nowrap;font-family:'Liberation Serif', serif;font-size:16px;">2.095us</div>
<div style="position:absolute;left:782px;top:241px;width:100px;height:18px;line-height:18px;text-align:center;white-space:nowrap;font-family:'Liberation Serif', serif;font-size:16px;">2.095us</div>
<div style="position:absolute;left:858px;top:241px;width:100px;height:18px;line-height:18px;text-align:center;white-space:nowrap;font-family:'Liberation Serif', serif;font-size:16px;">2.105us</div>
<div style="position:absolute;left:959px;top:241px;width:47px;overflow:hidden;height:18px;line-height:18px;white-space:nowrap;font-family:'Liberation Serif', serif;font-size:16px;">2.105us</div>
<div style="position:absolute;left:277px;top:291px;width:100px;height:18px;line-height:18px;text-align:center;white-space:nowrap;font-family:'Liberation Serif', serif;font-size:16px;">18.48us</div>
<div style="position:absolute;left:436px;top:291px;width:100px;height:18px;line-height:18px;text-align:center;white-space:nowrap;font-family:'Liberation Serif', serif;font-size:16px;">4.195us</div>
<div style="position:absolute;left:590px;top:291px;width:100px;height:18px;line-height:18px;text-align:center;white-space:nowrap;font-family:'Liberation Serif', serif;font-size:16px;">4.195us</div>
<div style="position:absolute;left:743px;top:291px;width:100px;height:18px;line-height:18px;text-align:center;white-space:nowrap;font-family:'Liberation Serif', serif;font-size:16px;">4.19us</div>
<div style="position:absolute;left:897px;top:291px;width:100px;height:18px;line-height:18px;text-align:center;white-space:nowrap;font-family:'Liberation Serif', serif;font-size:16px;">4.21us</div>
<div style="position:absolute;left:354px;top:341px;width:100px;height:18px;line-height:18px;text-align:center;white-space:nowrap;font-family:'Liberation Serif', serif;font-size:16px;">22.68us</div>
<div style="position:absolute;left:666px;top:341px;width:100px;height:18px;line-height:18px;text-align:center;white-space:nowrap;font-family:'Liberation Serif', serif;font-size:16px;">8.38us</div>
<div style="position:absolute;left:985px;top:341px;width:21px;overflow:hidden;height:18px;line-height:18px;white-space:nowrap;font-family:'Liberation Serif', serif;font-size:16px;">8.4</div>
<div style="position:absolute;left:507px;top:391px;width:100px;height:18px;line-height:18px;text-align:center;white-space:nowrap;font-family:'Liberation Serif', serif;font-size:16px;">31.065us</div>
<div style="position:absolute;left:978px;top:391px;width:28px;overflow:hidden;height:18px;line-height:18px;white-space:nowrap;font-family:'Liberation Serif', serif;font-size:16px;">16.8</div>
<div style="position:absolute;left:643px;top:441px;width:100px;height:18px;line-height:18px;text-align:center;white-space:nowrap;font-family:'Liberation Serif', serif;font-size:16px;">47.875us</div>
<div style="position:absolute;left:643px;top:491px;width:100px;height:18px;line-height:18px;text-align:center;white-space:nowrap;font-family:'Liberation Serif', serif;font-size:16px;">81.48us</div>
<div style="position:absolute;left:643px;top:541px;width:100px;height:18px;line-height:18px;text-align:center;white-space:nowrap;font-family:'Liberation Serif', serif;font-size:16px;">148.675us</div>
<div style="position:absolute;left:643px;top:591px;width:100px;height:18px;line-height:18px;text-align:center;white-space:nowrap;font-family:'Liberation Serif', serif;font-size:16px;">163.84us</div>
<div style="position:absolute;left:643px;top:641px;width:100px;height:18px;line-height:18px;text-align:center;white-space:nowrap;font-family:'Liberation Serif', serif;font-size:16px;">163.84us</div>
<div style="position:absolute;left:643px;top:691px;width:100px;height:18px;line-height:18px;text-align:center;white-space:nowrap;font-family:'Liberation Serif', serif;font-size:16px;">163.84us</div>
<div style="position:absolute;left:1006px;top:138px;width:17px;height:594px;background:linear-gradient(to right,#F3F1EC,#FEFEFA)"></div>
<div style="position:absolute;left:1007px;top:139px;width:13px;height:14px;border:1px solid #B4C8F6;border-radius:2px;background:linear-gradient(135deg,#DCE6FC,#BCCEF8 60%,#B0C4F4)"></div>
<svg style="position:absolute;left:1007px;top:139px;shape-rendering:auto" width="15" height="15" viewBox="0 0 15 15" shape-rendering="crispEdges"><path d="M4 9 L7.5 5.5 L11 9" stroke="#4D6185" stroke-width="2" fill="none"/></svg>
<div style="position:absolute;left:1007px;top:156px;width:13px;height:184px;border:1px solid #B4C8F6;border-radius:2px;background:linear-gradient(to right,#D2DEFB,#BACDF8 50%,#C2D3FA)"></div>
<svg style="position:absolute;left:1010px;top:245px;" width="8" height="8" viewBox="0 0 8 8" shape-rendering="crispEdges"><path d="M0 1.5 H7 M0 3.5 H7 M0 5.5 H7 M0 7.5 H7" stroke="#8CA4DC"/></svg>
<div style="position:absolute;left:1007px;top:716px;width:13px;height:14px;border:1px solid #B4C8F6;border-radius:2px;background:linear-gradient(135deg,#DCE6FC,#BCCEF8 60%,#B0C4F4)"></div>
<svg style="position:absolute;left:1007px;top:716px;shape-rendering:auto" width="15" height="15" viewBox="0 0 15 15" shape-rendering="crispEdges"><path d="M4 6 L7.5 9.5 L11 6" stroke="#4D6185" stroke-width="2" fill="none"/></svg>
<div style="position:absolute;left:1px;top:732px;width:118px;height:17px;background:linear-gradient(to bottom,#F3F1EC,#FEFEFA)"></div>
<div style="position:absolute;left:2px;top:733px;width:14px;height:13px;border:1px solid #B4C8F6;border-radius:2px;background:linear-gradient(135deg,#DCE6FC,#BCCEF8 60%,#B0C4F4)"></div>
<svg style="position:absolute;left:2px;top:733px;shape-rendering:auto" width="15" height="15" viewBox="0 0 15 15" shape-rendering="crispEdges"><path d="M9 4 L5.5 7.5 L9 11" stroke="#4D6185" stroke-width="2" fill="none"/></svg>
<div style="position:absolute;left:102px;top:733px;width:14px;height:13px;border:1px solid #B4C8F6;border-radius:2px;background:linear-gradient(135deg,#DCE6FC,#BCCEF8 60%,#B0C4F4)"></div>
<svg style="position:absolute;left:102px;top:733px;shape-rendering:auto" width="15" height="15" viewBox="0 0 15 15" shape-rendering="crispEdges"><path d="M6 4 L9.5 7.5 L6 11" stroke="#4D6185" stroke-width="2" fill="none"/></svg>
<div style="position:absolute;left:18px;top:733px;width:81px;height:13px;border:1px solid #B4C8F6;border-radius:2px;background:linear-gradient(to bottom,#D2DEFB,#BACDF8 50%,#C2D3FA)"></div>
<svg style="position:absolute;left:55px;top:736px;" width="8" height="8" viewBox="0 0 8 8" shape-rendering="crispEdges"><path d="M1.5 0 V7 M3.5 0 V7 M5.5 0 V7 M7.5 0 V7" stroke="#8CA4DC"/></svg>
<div style="position:absolute;left:123px;top:732px;width:60px;height:17px;background:linear-gradient(to bottom,#F3F1EC,#FEFEFA)"></div>
<div style="position:absolute;left:124px;top:733px;width:14px;height:13px;border:1px solid #B4C8F6;border-radius:2px;background:linear-gradient(135deg,#DCE6FC,#BCCEF8 60%,#B0C4F4)"></div>
<svg style="position:absolute;left:124px;top:733px;shape-rendering:auto" width="15" height="15" viewBox="0 0 15 15" shape-rendering="crispEdges"><path d="M9 4 L5.5 7.5 L9 11" stroke="#4D6185" stroke-width="2" fill="none"/></svg>
<div style="position:absolute;left:166px;top:733px;width:14px;height:13px;border:1px solid #B4C8F6;border-radius:2px;background:linear-gradient(135deg,#DCE6FC,#BCCEF8 60%,#B0C4F4)"></div>
<svg style="position:absolute;left:166px;top:733px;shape-rendering:auto" width="15" height="15" viewBox="0 0 15 15" shape-rendering="crispEdges"><path d="M6 4 L9.5 7.5 L6 11" stroke="#4D6185" stroke-width="2" fill="none"/></svg>
<div style="position:absolute;left:140px;top:733px;width:17px;height:13px;border:1px solid #B4C8F6;border-radius:2px;background:linear-gradient(to bottom,#D2DEFB,#BACDF8 50%,#C2D3FA)"></div>
<svg style="position:absolute;left:145px;top:736px;" width="8" height="8" viewBox="0 0 8 8" shape-rendering="crispEdges"><path d="M1.5 0 V7 M3.5 0 V7 M5.5 0 V7 M7.5 0 V7" stroke="#8CA4DC"/></svg>
<div style="position:absolute;left:186px;top:732px;width:57px;height:17px;background:linear-gradient(to bottom,#F3F1EC,#FEFEFA)"></div>
<div style="position:absolute;left:187px;top:733px;width:14px;height:13px;border:1px solid #B4C8F6;border-radius:2px;background:linear-gradient(135deg,#DCE6FC,#BCCEF8 60%,#B0C4F4)"></div>
<svg style="position:absolute;left:187px;top:733px;shape-rendering:auto" width="15" height="15" viewBox="0 0 15 15" shape-rendering="crispEdges"><path d="M9 4 L5.5 7.5 L9 11" stroke="#4D6185" stroke-width="2" fill="none"/></svg>
<div style="position:absolute;left:226px;top:733px;width:14px;height:13px;border:1px solid #B4C8F6;border-radius:2px;background:linear-gradient(135deg,#DCE6FC,#BCCEF8 60%,#B0C4F4)"></div>
<svg style="position:absolute;left:226px;top:733px;shape-rendering:auto" width="15" height="15" viewBox="0 0 15 15" shape-rendering="crispEdges"><path d="M6 4 L9.5 7.5 L6 11" stroke="#4D6185" stroke-width="2" fill="none"/></svg>
<div style="position:absolute;left:203px;top:733px;width:17px;height:13px;border:1px solid #B4C8F6;border-radius:2px;background:linear-gradient(to bottom,#D2DEFB,#BACDF8 50%,#C2D3FA)"></div>
<svg style="position:absolute;left:208px;top:736px;" width="8" height="8" viewBox="0 0 8 8" shape-rendering="crispEdges"><path d="M1.5 0 V7 M3.5 0 V7 M5.5 0 V7 M7.5 0 V7" stroke="#8CA4DC"/></svg>
<div style="position:absolute;left:247px;top:732px;width:759px;height:17px;background:linear-gradient(to bottom,#F3F1EC,#FEFEFA)"></div>
<div style="position:absolute;left:248px;top:733px;width:14px;height:13px;border:1px solid #B4C8F6;border-radius:2px;background:linear-gradient(135deg,#DCE6FC,#BCCEF8 60%,#B0C4F4)"></div>
<svg style="position:absolute;left:248px;top:733px;shape-rendering:auto" width="15" height="15" viewBox="0 0 15 15" shape-rendering="crispEdges"><path d="M9 4 L5.5 7.5 L9 11" stroke="#4D6185" stroke-width="2" fill="none"/></svg>
<div style="position:absolute;left:990px;top:733px;width:14px;height:13px;border:1px solid #B4C8F6;border-radius:2px;background:linear-gradient(135deg,#DCE6FC,#BCCEF8 60%,#B0C4F4)"></div>
<svg style="position:absolute;left:990px;top:733px;shape-rendering:auto" width="15" height="15" viewBox="0 0 15 15" shape-rendering="crispEdges"><path d="M6 4 L9.5 7.5 L6 11" stroke="#4D6185" stroke-width="2" fill="none"/></svg>
<div style="position:absolute;left:371px;top:733px;width:6px;height:13px;border:1px solid #B4C8F6;border-radius:2px;background:linear-gradient(to bottom,#D2DEFB,#BACDF8 50%,#C2D3FA)"></div>
<div style="position:absolute;left:1006px;top:732px;width:17px;height:17px;background:#ECE9D8"></div>
<div style="position:absolute;left:0px;top:749px;width:1024px;height:1px;background:#ACA899"></div>
<div style="position:absolute;left:0px;top:750px;width:1024px;height:16px;background:#ECE9D8"></div>
<div style="position:absolute;left:2px;top:751px;height:15px;line-height:15px;white-space:nowrap;font-size:12px;">就緒</div>
<div style="position:absolute;left:479px;top:752px;width:388px;height:14px;border-top:1px solid #ACA899;border-left:1px solid #ACA899;box-sizing:border-box"></div>
<div style="position:absolute;left:870px;top:752px;width:66px;height:14px;border-top:1px solid #ACA899;border-left:1px solid #ACA899;box-sizing:border-box"></div>
<div style="position:absolute;left:938px;top:752px;width:85px;height:14px;border-top:1px solid #ACA899;border-left:1px solid #ACA899;box-sizing:border-box"></div>
<div style="position:absolute;left:872px;top:752px;height:15px;line-height:15px;white-space:nowrap;font-size:12px;">停止!</div>
<div style="position:absolute;left:940px;top:752px;height:15px;line-height:15px;white-space:nowrap;font-size:12px;">一般模式</div>
<div style="position:absolute;left:0px;top:766px;width:1024px;height:2px;background:linear-gradient(to bottom,#3A7FE8,#1B5FD8)"></div>
<div style="position:absolute;left:297px;top:121px;width:75px;height:599px;border:5px solid #F00A0A;border-radius:2px;"></div>
<div style="position:absolute;left:833px;top:33px;width:141px;height:42px;border:5px solid #F00A0A;border-radius:2px;"></div>
</body></html>
